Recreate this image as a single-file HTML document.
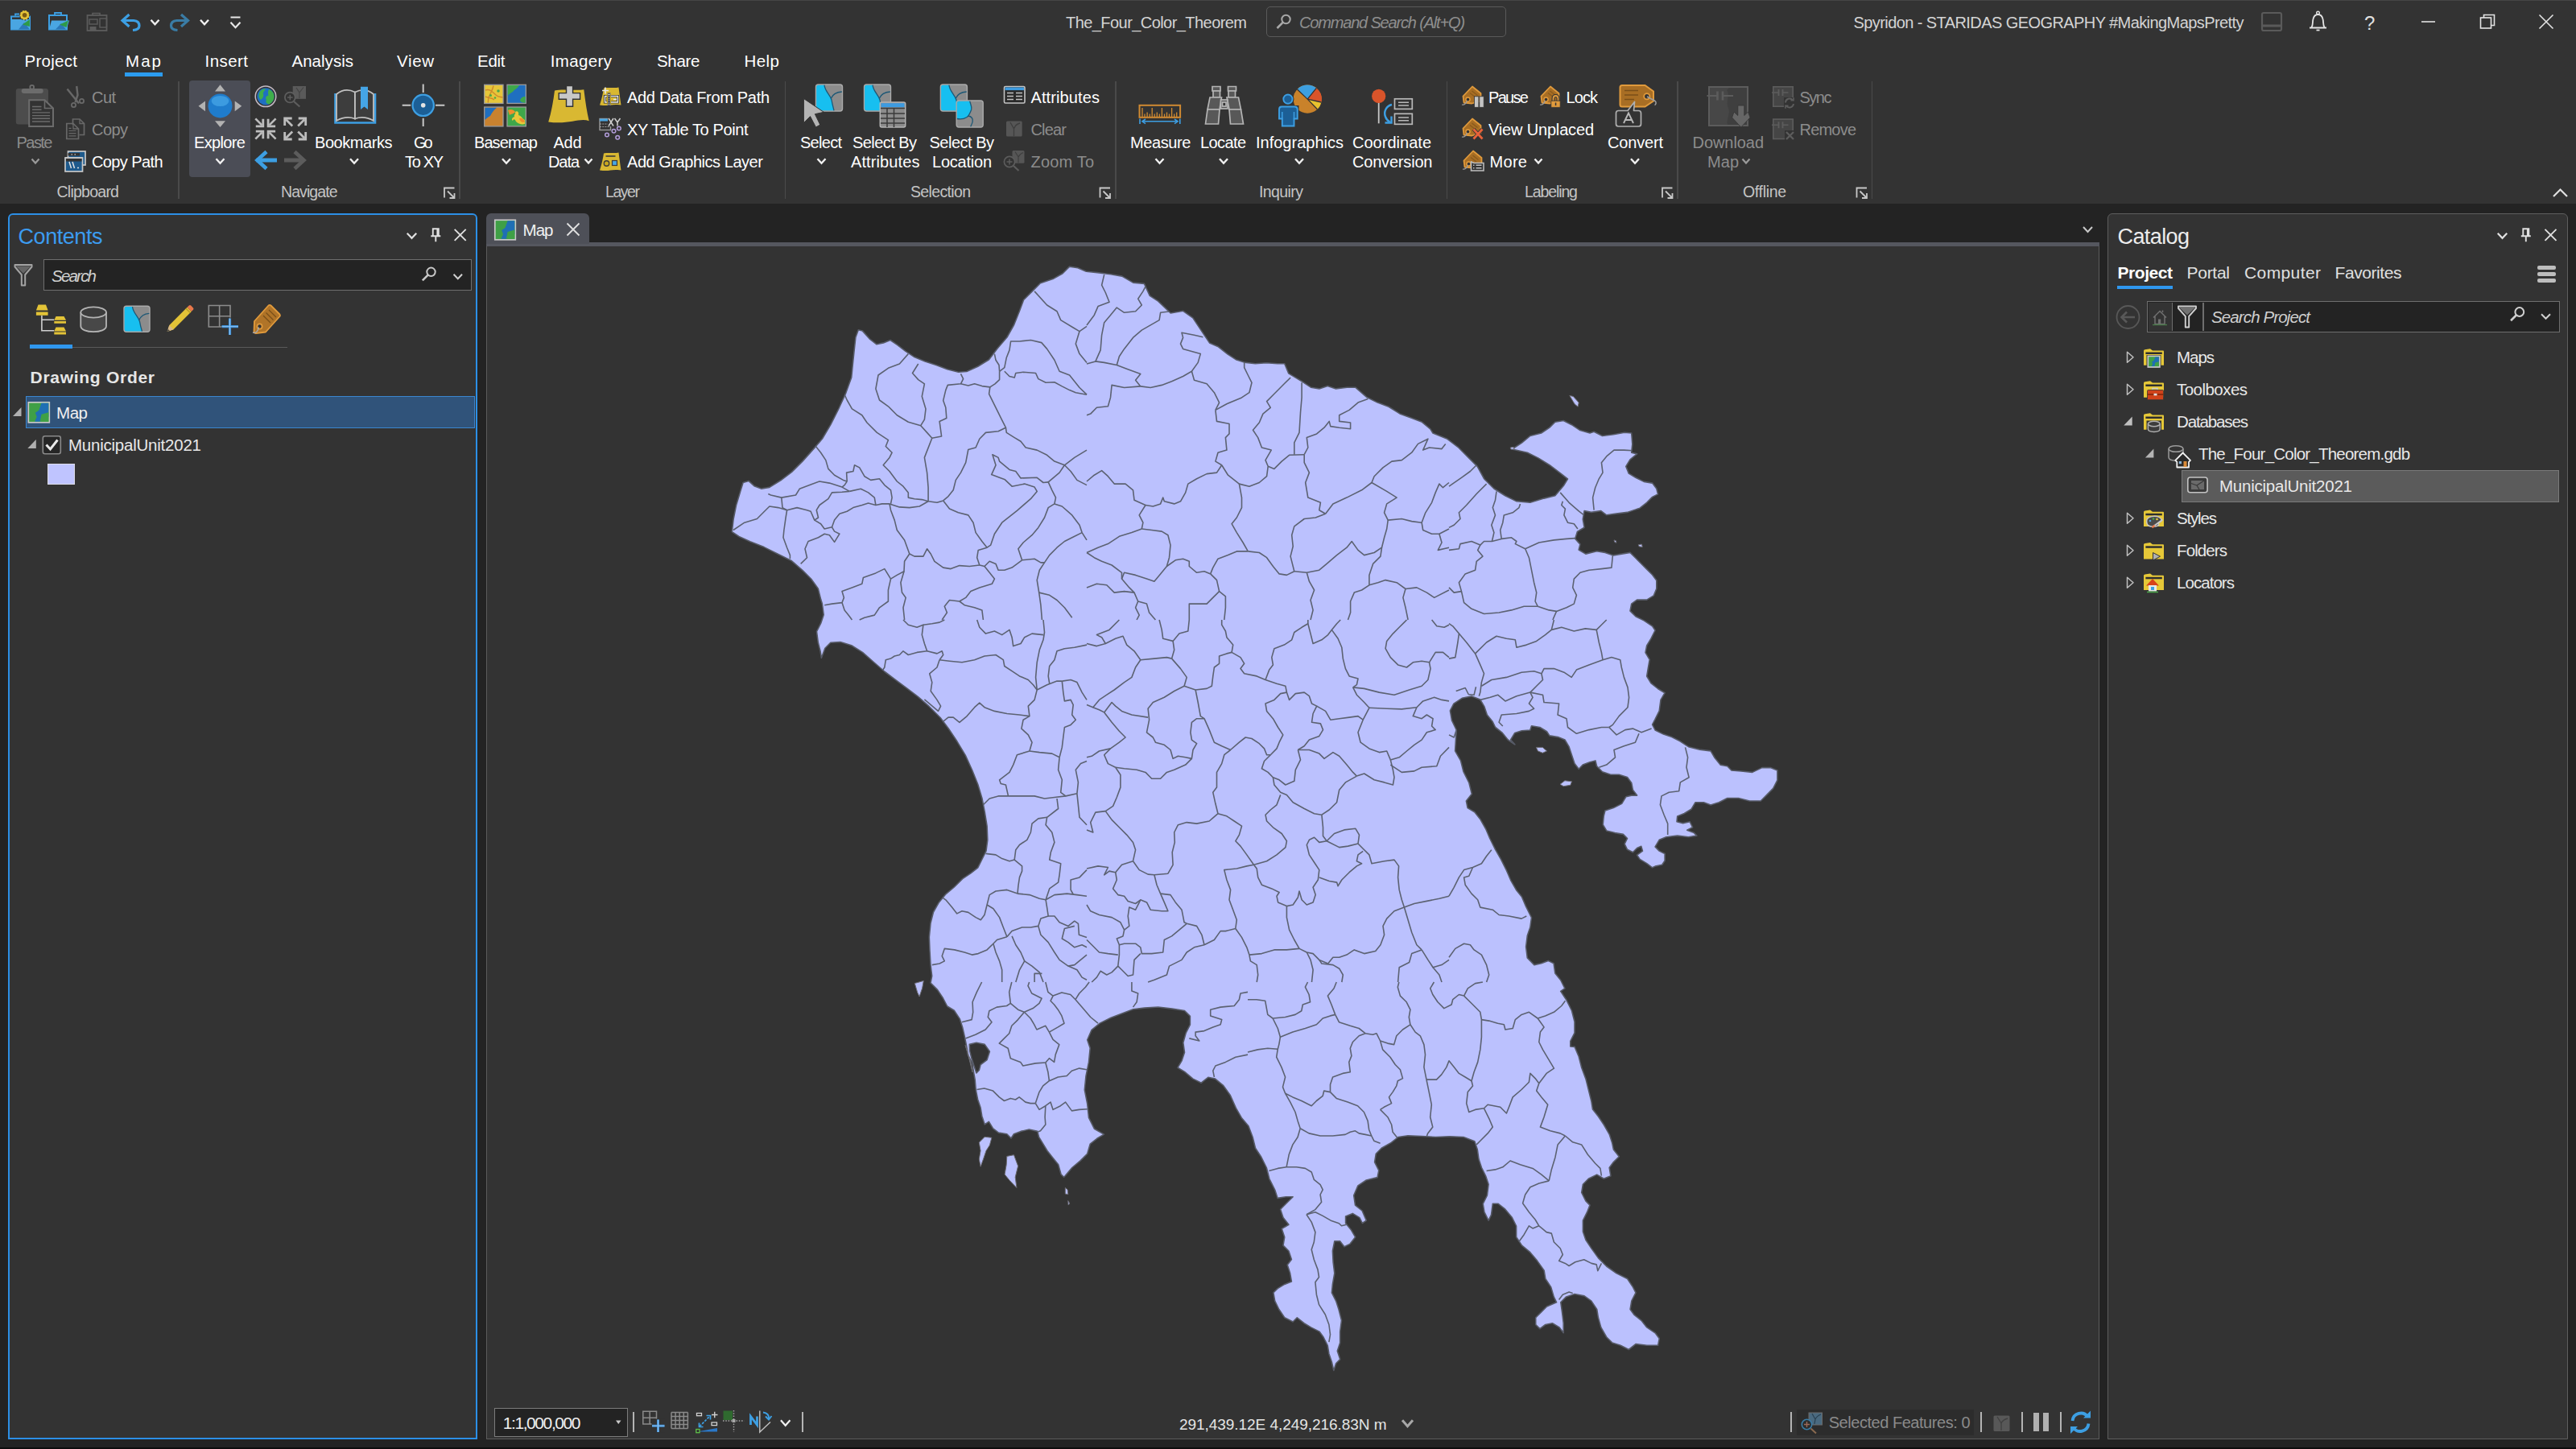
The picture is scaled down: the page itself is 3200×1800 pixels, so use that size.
<!DOCTYPE html>
<html><head><meta charset="utf-8"><title>The_Four_Color_Theorem - Map - ArcGIS Pro</title>
<style>
html,body{margin:0;padding:0;}
body{width:3200px;height:1800px;background:#232323;overflow:hidden;position:relative;font-family:"Liberation Sans",sans-serif;}
.t{position:absolute;white-space:nowrap;}
.b{position:absolute;}
svg.ov{position:absolute;left:0;top:0;}
</style></head><body>
<div class="b" style="left:0px;top:0px;width:3200px;height:253px;background:#333333;"></div>
<div class="b" style="left:0px;top:0px;width:3200px;height:1px;background:#454545;"></div>
<div class="b" style="left:0px;top:1798px;width:3200px;height:2px;background:#0c0c0c;"></div>
<div class="b" style="left:10px;top:265px;width:583px;height:1523px;background:#333333;border:2px solid #2c8fe6;border-radius:6px 6px 0 0;box-sizing:border-box;"></div>
<div class="b" style="left:604px;top:305px;width:2004px;height:1483px;background:#333333;border:1.5px solid #5c5c5c;border-top:none;box-sizing:border-box;"></div>
<div class="b" style="left:604px;top:301px;width:2004px;height:5px;background:#55575f;"></div>
<div class="b" style="left:604px;top:265px;width:128px;height:38px;background:#4e5058;border-radius:6px 6px 0 0;"></div>
<div class="b" style="left:2618px;top:265px;width:572px;height:1523px;background:#333333;border:1.5px solid #5e5e5e;border-radius:6px 6px 0 0;box-sizing:border-box;"></div>
<div class="t" style="left:1324.0px;top:15.6px;font-size:20px;line-height:24px;color:#d4d4d4;letter-spacing:-0.56px;">The_Four_Color_Theorem</div>
<div class="b" style="left:1572.5px;top:7.5px;width:298px;height:38px;border:1.5px solid #5a5a5a;border-radius:5px;box-sizing:border-box;"></div>
<div class="t" style="left:1614.0px;top:15.6px;font-size:20px;line-height:24px;color:#8e8e8e;letter-spacing:-1.17px;font-style:italic;">Command Search (Alt+Q)</div>
<div class="t" style="left:2302.5px;top:15.6px;font-size:20px;line-height:24px;color:#d4d4d4;letter-spacing:-0.58px;">Spyridon - STARIDAS GEOGRAPHY #MakingMapsPretty</div>
<div class="t" style="left:2937.0px;top:14.2px;font-size:24px;line-height:29px;color:#e0e0e0;">?</div>
<div class="t" style="left:30.5px;top:63.2px;font-size:20.5px;line-height:25px;color:#ffffff;letter-spacing:0.28px;">Project</div>
<div class="t" style="left:156.0px;top:63.2px;font-size:20.5px;line-height:25px;color:#ffffff;letter-spacing:2.06px;">Map</div>
<div class="t" style="left:254.5px;top:63.2px;font-size:20.5px;line-height:25px;color:#ffffff;letter-spacing:0.45px;">Insert</div>
<div class="t" style="left:362.5px;top:63.2px;font-size:20.5px;line-height:25px;color:#ffffff;letter-spacing:0.02px;">Analysis</div>
<div class="t" style="left:493.0px;top:63.2px;font-size:20.5px;line-height:25px;color:#ffffff;letter-spacing:0.64px;">View</div>
<div class="t" style="left:593.0px;top:63.2px;font-size:20.5px;line-height:25px;color:#ffffff;letter-spacing:-0.28px;">Edit</div>
<div class="t" style="left:683.7px;top:63.2px;font-size:20.5px;line-height:25px;color:#ffffff;letter-spacing:0.37px;">Imagery</div>
<div class="t" style="left:816.0px;top:63.2px;font-size:20.5px;line-height:25px;color:#ffffff;letter-spacing:-0.30px;">Share</div>
<div class="t" style="left:924.5px;top:63.2px;font-size:20.5px;line-height:25px;color:#ffffff;letter-spacing:0.45px;">Help</div>
<div class="b" style="left:155px;top:90px;width:47px;height:4.5px;background:#2b9cf0;"></div>
<div class="b" style="left:221.25px;top:101px;width:1.5px;height:146px;background:#4a4a4a;"></div>
<div class="b" style="left:570.25px;top:101px;width:1.5px;height:146px;background:#4a4a4a;"></div>
<div class="b" style="left:974.75px;top:101px;width:1.5px;height:146px;background:#4a4a4a;"></div>
<div class="b" style="left:1385.25px;top:101px;width:1.5px;height:146px;background:#4a4a4a;"></div>
<div class="b" style="left:1796.75px;top:101px;width:1.5px;height:146px;background:#4a4a4a;"></div>
<div class="b" style="left:2083.25px;top:101px;width:1.5px;height:146px;background:#4a4a4a;"></div>
<div class="b" style="left:2324.75px;top:101px;width:1.5px;height:146px;background:#4a4a4a;"></div>
<div class="t" style="left:20.5px;top:165.1px;font-size:20px;line-height:24px;color:#8c8c8c;letter-spacing:-1.54px;">Paste</div>
<div class="t" style="left:114.0px;top:109.1px;font-size:20px;line-height:24px;color:#8c8c8c;letter-spacing:-0.56px;">Cut</div>
<div class="t" style="left:114.0px;top:149.1px;font-size:20px;line-height:24px;color:#8c8c8c;letter-spacing:-0.56px;">Copy</div>
<div class="t" style="left:114.0px;top:189.1px;font-size:20px;line-height:24px;color:#ffffff;letter-spacing:-0.61px;">Copy Path</div>
<div class="t" style="left:70.5px;top:226.7px;font-size:19.5px;line-height:23px;color:#c4c4c4;letter-spacing:-0.75px;">Clipboard</div>
<div class="b" style="left:235px;top:100px;width:76px;height:120px;background:#4b4d56;border-radius:4px;"></div>
<div class="t" style="left:241.0px;top:165.1px;font-size:20px;line-height:24px;color:#fff;letter-spacing:-0.64px;">Explore</div>
<div class="t" style="left:391.0px;top:165.1px;font-size:20px;line-height:24px;color:#fff;letter-spacing:-0.44px;">Bookmarks</div>
<div class="t" style="left:514.0px;top:165.1px;font-size:20px;line-height:24px;color:#fff;letter-spacing:-3.18px;">Go</div>
<div class="t" style="left:503.0px;top:188.6px;font-size:20px;line-height:24px;color:#fff;letter-spacing:-1.34px;">To XY</div>
<div class="t" style="left:349.0px;top:226.7px;font-size:19.5px;line-height:23px;color:#c4c4c4;letter-spacing:-0.92px;">Navigate</div>
<div class="t" style="left:589.0px;top:165.1px;font-size:20px;line-height:24px;color:#fff;letter-spacing:-0.92px;">Basemap</div>
<div class="t" style="left:687.5px;top:165.1px;font-size:20px;line-height:24px;color:#fff;letter-spacing:-0.29px;">Add</div>
<div class="t" style="left:681.0px;top:188.6px;font-size:20px;line-height:24px;color:#fff;letter-spacing:-1.08px;">Data</div>
<div class="t" style="left:779.0px;top:109.1px;font-size:20px;line-height:24px;color:#fff;letter-spacing:-0.31px;">Add Data From Path</div>
<div class="t" style="left:779.0px;top:149.1px;font-size:20px;line-height:24px;color:#fff;letter-spacing:-0.39px;">XY Table To Point</div>
<div class="t" style="left:779.0px;top:189.1px;font-size:20px;line-height:24px;color:#fff;letter-spacing:-0.46px;">Add Graphics Layer</div>
<div class="t" style="left:752.0px;top:226.7px;font-size:19.5px;line-height:23px;color:#c4c4c4;letter-spacing:-1.45px;">Layer</div>
<div class="t" style="left:994.0px;top:165.1px;font-size:20px;line-height:24px;color:#fff;letter-spacing:-0.72px;">Select</div>
<div class="t" style="left:1059.0px;top:165.1px;font-size:20px;line-height:24px;color:#fff;letter-spacing:-0.56px;">Select By</div>
<div class="t" style="left:1057.0px;top:188.6px;font-size:20px;line-height:24px;color:#fff;letter-spacing:0.11px;">Attributes</div>
<div class="t" style="left:1154.5px;top:165.1px;font-size:20px;line-height:24px;color:#fff;letter-spacing:-0.50px;">Select By</div>
<div class="t" style="left:1158.0px;top:188.6px;font-size:20px;line-height:24px;color:#fff;letter-spacing:-0.23px;">Location</div>
<div class="t" style="left:1280.5px;top:109.1px;font-size:20px;line-height:24px;color:#fff;letter-spacing:0.11px;">Attributes</div>
<div class="t" style="left:1280.5px;top:149.1px;font-size:20px;line-height:24px;color:#8c8c8c;letter-spacing:-0.82px;">Clear</div>
<div class="t" style="left:1280.5px;top:189.1px;font-size:20px;line-height:24px;color:#8c8c8c;letter-spacing:0.18px;">Zoom To</div>
<div class="t" style="left:1131.0px;top:226.7px;font-size:19.5px;line-height:23px;color:#c4c4c4;letter-spacing:-0.65px;">Selection</div>
<div class="t" style="left:1404.0px;top:165.1px;font-size:20px;line-height:24px;color:#fff;letter-spacing:-0.39px;">Measure</div>
<div class="t" style="left:1491.0px;top:165.1px;font-size:20px;line-height:24px;color:#fff;letter-spacing:-0.61px;">Locate</div>
<div class="t" style="left:1560.0px;top:165.1px;font-size:20px;line-height:24px;color:#fff;">Infographics</div>
<div class="t" style="left:1680.0px;top:165.1px;font-size:20px;line-height:24px;color:#fff;letter-spacing:0.02px;">Coordinate</div>
<div class="t" style="left:1680.0px;top:188.6px;font-size:20px;line-height:24px;color:#fff;letter-spacing:-0.19px;">Conversion</div>
<div class="t" style="left:1564.0px;top:226.7px;font-size:19.5px;line-height:23px;color:#c4c4c4;letter-spacing:-0.59px;">Inquiry</div>
<div class="t" style="left:1849.0px;top:109.1px;font-size:20px;line-height:24px;color:#fff;letter-spacing:-1.68px;">Pause</div>
<div class="t" style="left:1945.5px;top:109.1px;font-size:20px;line-height:24px;color:#fff;letter-spacing:-0.92px;">Lock</div>
<div class="t" style="left:1849.0px;top:149.1px;font-size:20px;line-height:24px;color:#fff;letter-spacing:-0.17px;">View Unplaced</div>
<div class="t" style="left:1850.5px;top:189.1px;font-size:20px;line-height:24px;color:#fff;letter-spacing:0.31px;">More</div>
<div class="t" style="left:1997.0px;top:165.1px;font-size:20px;line-height:24px;color:#fff;letter-spacing:-0.17px;">Convert</div>
<div class="t" style="left:1894.0px;top:226.7px;font-size:19.5px;line-height:23px;color:#c4c4c4;letter-spacing:-1.11px;">Labeling</div>
<div class="t" style="left:2102.5px;top:165.1px;font-size:20px;line-height:24px;color:#8c8c8c;letter-spacing:-0.06px;">Download</div>
<div class="t" style="left:2121.0px;top:188.6px;font-size:20px;line-height:24px;color:#8c8c8c;letter-spacing:0.05px;">Map</div>
<div class="t" style="left:2235.5px;top:109.1px;font-size:20px;line-height:24px;color:#8c8c8c;letter-spacing:-1.49px;">Sync</div>
<div class="t" style="left:2235.5px;top:149.1px;font-size:20px;line-height:24px;color:#8c8c8c;letter-spacing:-0.79px;">Remove</div>
<div class="t" style="left:2165.0px;top:226.7px;font-size:19.5px;line-height:23px;color:#c4c4c4;letter-spacing:-0.33px;">Offline</div>
<div class="t" style="left:22.5px;top:277.6px;font-size:27px;line-height:32px;color:#3c9cf0;letter-spacing:-0.44px;">Contents</div>
<div class="b" style="left:54px;top:322px;width:532px;height:38.5px;background:#232323;border:1.5px solid #6e6e6e;box-sizing:border-box;"></div>
<div class="t" style="left:64.0px;top:330.4px;font-size:20.5px;line-height:25px;color:#d0d0d0;letter-spacing:-1.79px;font-style:italic;">Search</div>
<div class="b" style="left:90px;top:430.5px;width:267px;height:1.5px;background:#5a5a5a;"></div>
<div class="b" style="left:37px;top:427.5px;width:53px;height:5px;background:#2f97ee;"></div>
<div class="t" style="left:37.5px;top:456.2px;font-size:21px;line-height:25px;color:#e6e6e6;letter-spacing:0.72px;font-weight:700;">Drawing Order</div>
<div class="b" style="left:32px;top:492px;width:558px;height:40px;background:#30537a;border:1.5px solid #3b86cf;box-sizing:border-box;"></div>
<div class="t" style="left:70.0px;top:500.4px;font-size:20.5px;line-height:25px;color:#f0f0f0;letter-spacing:-0.44px;">Map</div>
<div class="t" style="left:85.0px;top:539.9px;font-size:20.5px;line-height:25px;color:#e8e8e8;letter-spacing:-0.23px;">MunicipalUnit2021</div>
<div class="b" style="left:59px;top:576px;width:33.5px;height:26px;background:#bfc4ff;border:1.5px solid #dcdcea;box-sizing:border-box;"></div>
<div class="t" style="left:649.5px;top:272.9px;font-size:20.5px;line-height:25px;color:#f0f0f0;letter-spacing:-0.94px;">Map</div>
<div class="b" style="left:613.5px;top:1749px;width:166px;height:35.5px;background:#232323;border:1.5px solid #7c7c7c;box-sizing:border-box;"></div>
<div class="t" style="left:624.7px;top:1754.9px;font-size:21px;line-height:25px;color:#f0f0f0;letter-spacing:-1.41px;">1:1,000,000</div>
<div class="b" style="left:786px;top:1754px;width:2px;height:25px;background:#b4b4b4;"></div>
<div class="b" style="left:996px;top:1754px;width:2px;height:25px;background:#b4b4b4;"></div>
<div class="b" style="left:2223.7px;top:1754px;width:2px;height:25px;background:#b4b4b4;"></div>
<div class="b" style="left:2459.5px;top:1754px;width:2px;height:25px;background:#b4b4b4;"></div>
<div class="b" style="left:2511px;top:1754px;width:2px;height:25px;background:#b4b4b4;"></div>
<div class="b" style="left:2559px;top:1754px;width:2px;height:25px;background:#b4b4b4;"></div>
<div class="t" style="left:1465.0px;top:1757.9px;font-size:19px;line-height:23px;color:#e4e4e4;letter-spacing:-0.05px;">291,439.12E 4,249,216.83N m</div>
<div class="b" style="left:2231.7px;top:1751px;width:220.5px;height:32px;background:#2c2c2c;"></div>
<div class="t" style="left:2271.7px;top:1755.1px;font-size:20px;line-height:24px;color:#8a8a8a;letter-spacing:-0.46px;">Selected Features: 0</div>
<div class="b" style="left:2526px;top:1755px;width:6.5px;height:23px;background:#b0b0b0;"></div>
<div class="b" style="left:2537.5px;top:1755px;width:7px;height:23px;background:#b0b0b0;"></div>
<div class="t" style="left:2630.5px;top:277.6px;font-size:27px;line-height:32px;color:#ececec;letter-spacing:-0.59px;">Catalog</div>
<div class="t" style="left:2630.5px;top:325.7px;font-size:21px;line-height:25px;color:#ffffff;letter-spacing:-0.45px;font-weight:700;">Project</div>
<div class="t" style="left:2716.5px;top:325.7px;font-size:21px;line-height:25px;color:#e0e0e0;letter-spacing:-0.27px;">Portal</div>
<div class="t" style="left:2788.0px;top:325.7px;font-size:21px;line-height:25px;color:#e0e0e0;letter-spacing:0.40px;">Computer</div>
<div class="t" style="left:2900.5px;top:325.7px;font-size:21px;line-height:25px;color:#e0e0e0;letter-spacing:-0.42px;">Favorites</div>
<div class="b" style="left:2630px;top:355px;width:69px;height:3.5px;background:#2f97ee;"></div>
<div class="b" style="left:3152px;top:329.5px;width:23px;height:5px;background:#bdbdbd;border-radius:2px;"></div>
<div class="b" style="left:3152px;top:337.7px;width:23px;height:5px;background:#bdbdbd;border-radius:2px;"></div>
<div class="b" style="left:3152px;top:345.9px;width:23px;height:5px;background:#bdbdbd;border-radius:2px;"></div>
<div class="b" style="left:2667px;top:374px;width:513px;height:38.5px;background:#232323;border:1.5px solid #6e6e6e;box-sizing:border-box;"></div>
<div class="b" style="left:2668.5px;top:375.5px;width:30px;height:35.5px;background:#333333;border-right:1.5px solid #6e6e6e;box-sizing:border-box;"></div>
<div class="b" style="left:2736px;top:375.5px;width:1.5px;height:35.5px;background:#6e6e6e;"></div>
<div class="t" style="left:2747.0px;top:381.4px;font-size:20.5px;line-height:25px;color:#cfcfcf;letter-spacing:-0.88px;font-style:italic;">Search Project</div>
<div class="b" style="left:2710px;top:584px;width:468.5px;height:39.5px;background:#5b5b5b;border:1.5px solid #7a7a7a;box-sizing:border-box;"></div>
<div class="t" style="left:2704.0px;top:431.4px;font-size:20.5px;line-height:25px;color:#e8e8e8;letter-spacing:-1.04px;">Maps</div>
<div class="t" style="left:2704.0px;top:471.4px;font-size:20.5px;line-height:25px;color:#e8e8e8;letter-spacing:-0.54px;">Toolboxes</div>
<div class="t" style="left:2704.0px;top:511.4px;font-size:20.5px;line-height:25px;color:#e8e8e8;letter-spacing:-1.13px;">Databases</div>
<div class="t" style="left:2731.0px;top:551.4px;font-size:20.5px;line-height:25px;color:#e8e8e8;letter-spacing:-0.78px;">The_Four_Color_Theorem.gdb</div>
<div class="t" style="left:2757.0px;top:591.4px;font-size:20.5px;line-height:25px;color:#e8e8e8;letter-spacing:-0.23px;">MunicipalUnit2021</div>
<div class="t" style="left:2704.0px;top:631.4px;font-size:20.5px;line-height:25px;color:#e8e8e8;letter-spacing:-1.17px;">Styles</div>
<div class="t" style="left:2704.0px;top:671.4px;font-size:20.5px;line-height:25px;color:#e8e8e8;letter-spacing:-0.89px;">Folders</div>
<div class="t" style="left:2704.0px;top:711.4px;font-size:20.5px;line-height:25px;color:#e8e8e8;letter-spacing:-0.95px;">Locators</div>
<svg class="ov" width="3200" height="1800" viewBox="0 0 3200 1800">
<g transform="translate(13 14) scale(1)"><path d="M6 5.5V3.5H11" fill="none" stroke="#3d9fe3" stroke-width="1.8"/>
<path d="M1 6.5H24V22.5H1Z" fill="none" stroke="#3d9fe3" stroke-width="2"/>
<path d="M1 10H24V22.5H1Z" fill="#4aa6e2"/>
<path d="M10 22.5L17 14L24 22.5Z" fill="#2b78b8"/><path d="M15 16.5L24 10V19Z" fill="#2e9a48"/>
<circle cx="17.6" cy="4.8" r="6" fill="#e3c337"/><circle cx="17.6" cy="4.8" r="6" fill="none" stroke="#333" stroke-width="1.2" stroke-dasharray="1.6 2.2"/><circle cx="17.6" cy="4.8" r="2.8" fill="#7a5a12"/></g>
<g transform="translate(60 14) scale(1)"><path d="M8 5V2H16V5" fill="none" stroke="#3d9fe3" stroke-width="1.8"/>
<path d="M1 5H23V22.5H1Z" fill="none" stroke="#3d9fe3" stroke-width="2"/>
<path d="M4 11.5H26L22.5 22.5H1Z" fill="#4aa6e2"/>
<path d="M9 22.5L16 15L22 22.5Z" fill="#2b78b8"/><path d="M14 16.5L25 11.5L22.5 20Z" fill="#2e9a48"/></g>
<g transform="translate(107 15) scale(1)"><path d="M8 4V1.5H17V4" fill="none" stroke="#5c5c5c" stroke-width="1.6"/>
<rect x="1.5" y="4" width="24" height="19" fill="none" stroke="#5c5c5c" stroke-width="1.8"/>
<rect x="17" y="8" width="8.5" height="11" fill="none" stroke="#5c5c5c" stroke-width="1.4"/>
<rect x="4" y="9" width="10" height="6" fill="none" stroke="#5c5c5c" stroke-width="1.4"/>
<rect x="4.5" y="18" width="8" height="5" fill="#5c5c5c"/></g>
<path d="M160.5 18L152 25.5L160.5 33M152.5 25.5H166Q173 26 173 32Q173 37 165 37.5" fill="none" stroke="#3d9fe3" stroke-width="3.2" stroke-linejoin="miter"/>
<path d="M187.5 24.75L192.5 30.25L197.5 24.75" fill="none" stroke="#f0f0f0" stroke-width="2.4"/>
<path d="M225 18L233.5 25.5L225 33M233 25.5H219.5Q212.5 26 212.5 32Q212.5 37 220.5 37.5" fill="none" stroke="#3a7ca5" stroke-width="3.2"/>
<path d="M249.0 24.75L254 30.25L259.0 24.75" fill="none" stroke="#f0f0f0" stroke-width="2.4"/>
<path d="M286.5 21.5H298.5" stroke="#e8e8e8" stroke-width="2"/>
<path d="M286.5 27.75L292.5 34.25L298.5 27.75" fill="none" stroke="#e8e8e8" stroke-width="2.2"/>
<rect x="2810" y="16" width="24" height="22" rx="2" fill="none" stroke="#5a5a5a" stroke-width="2.2"/><path d="M2811 32H2833" stroke="#5a5a5a" stroke-width="3"/>
<path d="M2869 34.5H2890M2871.5 34C2873.5 31 2872.5 27 2873.5 23.5C2874.5 19.5 2877 18 2879.5 18C2882 18 2884.5 19.5 2885.5 23.5C2886.5 27 2885.5 31 2887.5 34" fill="none" stroke="#e4e4e4" stroke-width="1.8"/><circle cx="2879.5" cy="16" r="1.8" fill="none" stroke="#e4e4e4" stroke-width="1.4"/><path d="M2877.5 37.5H2881.5" stroke="#e4e4e4" stroke-width="1.8"/>
<path d="M3008 27H3025" stroke="#e4e4e4" stroke-width="1.6"/>
<rect x="3081.5" y="22" width="13" height="13" fill="none" stroke="#e4e4e4" stroke-width="1.6"/><path d="M3085.5 22V18.5H3098.5V31.5H3094.5" fill="none" stroke="#e4e4e4" stroke-width="1.6"/>
<path d="M3154.5 18.5L3171.5 35.5M3171.5 18.5L3154.5 35.5" stroke="#e4e4e4" stroke-width="1.6"/>
<circle cx="1597.500" cy="24" r="5.200" fill="none" stroke="#a8a8a8" stroke-width="2"/><path d="M1593.800 27.700L1586.500 35" stroke="#a8a8a8" stroke-width="2.600"/>
<path d="M3172 244L3180.5 235.5L3189 244" fill="none" stroke="#e0e0e0" stroke-width="2.2"/>
<rect x="19.8" y="110" width="40.2" height="44.5" rx="3" fill="#4c4c4c"/>
<rect x="26.7" y="110" width="27" height="6" rx="3" fill="#6c6c6c"/><circle cx="39.7" cy="108.3" r="2.4" fill="none" stroke="#6c6c6c" stroke-width="1.8"/>
<path d="M36.2 124.2H55.5L66 134.5V157H36.2Z" fill="#333" stroke="#6c6c6c" stroke-width="2"/><path d="M55.5 124.2V134.5H66" fill="none" stroke="#6c6c6c" stroke-width="1.6"/>
<path d="M40 132.5H51.5M40 136.2H51.5M40 139.9H62M40 143.6H62M40 147.3H62M40 151H62" stroke="#6c6c6c" stroke-width="1.4"/>
<path d="M39.5 197.5L44 202.5L48.5 197.5" fill="none" stroke="#9a9a9a" stroke-width="2.2"/>
<path d="M83.5 110.5L98 128.5M95.2 107L96.5 118L93.5 127" fill="none" stroke="#686868" stroke-width="2.4"/>
<circle cx="91.5" cy="130.5" r="2.6" fill="none" stroke="#686868" stroke-width="1.8"/><circle cx="101.5" cy="125.5" r="2.6" fill="none" stroke="#686868" stroke-width="1.8"/>
<path d="M90.5 155V148H99L104.5 153.5V167.5H98.5" fill="none" stroke="#686868" stroke-width="1.7"/><path d="M99 148V153.5H104.5" fill="none" stroke="#686868" stroke-width="1.3"/>
<path d="M82.8 153.5H91L97.5 160V172.5H82.8Z" fill="none" stroke="#686868" stroke-width="1.7"/><path d="M91 153.5V160H97.5" fill="none" stroke="#686868" stroke-width="1.3"/>
<path d="M85.5 162.5H94.5M85.5 165.7H94.5M85.5 168.9H94.5M85.5 159.3H88.5" stroke="#686868" stroke-width="1.2"/>
<rect x="84.5" y="188" width="21.5" height="17" fill="#1e5a8c" stroke="#c8c8c8" stroke-width="1.7"/><path d="M84.5 191.8H99" stroke="#333" stroke-width="3.5"/><path d="M88.5 191.8h1.5M92.5 191.8h1.5" stroke="#c8c8c8" stroke-width="1.2"/>
<rect x="81" y="196" width="21.5" height="17" fill="#1e5a8c" stroke="#c8c8c8" stroke-width="1.7"/><path d="M82 198.7H101.5" stroke="#333" stroke-width="3.6"/><path d="M81 196H102.500" stroke="#c8c8c8" stroke-width="1.7"/>
<path d="M86 201L88.500 209M90 201L92.500 209" stroke="#e0e0e0" stroke-width="1.5"/><path d="M96 208.500h2" stroke="#e0e0e0" stroke-width="1.6"/>
<circle cx="273.5" cy="131.4" r="15" fill="#1f7ccc"/><ellipse cx="273.5" cy="125.5" rx="10.8" ry="6.6" fill="#3c9be0"/>
<path d="M273.5 105.300L267 113.400H280ZM273.5 157.900L267 150.200H280ZM246.5 131.800L255 125.400V138.200ZM300.300 131.800L291.700 125.400V138.200Z" fill="#b2b2b2"/>
<path d="M268.5 197.25L273.5 202.75L278.5 197.25" fill="none" stroke="#f0f0f0" stroke-width="2.4"/>
<circle cx="330" cy="119.800" r="12.800" fill="none" stroke="#c4bcc6" stroke-width="1.5"/><circle cx="330" cy="119.800" r="10.600" fill="#1f6fc2"/>
<path d="M322 116C323 112 327 110 330 110.500C329 113 326.500 114 327 117C328 120 326 122 324 124C321.500 122 321 119 322 116Z" fill="#3fae4a"/>
<path d="M334 111C338 112.500 340.500 116 340.500 120C340.500 124 338 127.500 334.500 129.500C331 129 329.500 126.500 331 124C329 121.500 331 119 333.500 118.500C332.500 115.500 333 113 334 111Z" fill="#3fae4a"/>
<rect x="363.700" y="107" width="16.300" height="15.800" fill="#5a5a5a"/><path d="M368 109L372 115V122M377 108.500L372 115" stroke="#444" stroke-width="1.200" fill="none"/>
<circle cx="360.300" cy="121" r="6.400" fill="#333" stroke="#5e5e5e" stroke-width="1.800"/><path d="M357 121H363.600M360.300 117.700V124.300" stroke="#5e5e5e" stroke-width="1.500"/><path d="M365 126L372.300 132.500" stroke="#5e5e5e" stroke-width="2.200"/>
<path d="M317.3 147.3L325.3 155.3" stroke="#bdbdbd" stroke-width="2.6"/><path d="M317.8 156.8H326.8V147.8" fill="none" stroke="#bdbdbd" stroke-width="2.8"/>
<path d="M342.6 147.3L334.6 155.3" stroke="#bdbdbd" stroke-width="2.6"/><path d="M342.1 156.8H333.1V147.8" fill="none" stroke="#bdbdbd" stroke-width="2.8"/>
<path d="M317.3 172.7L325.3 164.7" stroke="#bdbdbd" stroke-width="2.6"/><path d="M317.8 163.2H326.8V172.2" fill="none" stroke="#bdbdbd" stroke-width="2.8"/>
<path d="M342.6 172.7L334.6 164.7" stroke="#bdbdbd" stroke-width="2.6"/><path d="M342.1 163.2H333.1V172.2" fill="none" stroke="#bdbdbd" stroke-width="2.8"/>
<path d="M363.2 156.5L355.2 148.5" stroke="#bdbdbd" stroke-width="2.6"/><path d="M362.7 147.0H353.7V156.0" fill="none" stroke="#bdbdbd" stroke-width="2.8"/>
<path d="M370.2 156.5L378.2 148.5" stroke="#bdbdbd" stroke-width="2.6"/><path d="M370.7 147.0H379.7V156.0" fill="none" stroke="#bdbdbd" stroke-width="2.8"/>
<path d="M363.2 163.5L355.2 171.5" stroke="#bdbdbd" stroke-width="2.6"/><path d="M362.7 173.0H353.7V164.0" fill="none" stroke="#bdbdbd" stroke-width="2.8"/>
<path d="M370.2 163.5L378.2 171.5" stroke="#bdbdbd" stroke-width="2.6"/><path d="M370.7 173.0H379.7V164.0" fill="none" stroke="#bdbdbd" stroke-width="2.8"/>
<path d="M318.500 199H344" stroke="#3d9fe3" stroke-width="5"/><path d="M331 188.500L319.500 199L331 209.500" fill="none" stroke="#3d9fe3" stroke-width="4.600"/>
<path d="M353 199H378" stroke="#5c5c5c" stroke-width="5"/><path d="M366 188.500L377.500 199L366 209.500" fill="none" stroke="#5c5c5c" stroke-width="4.600"/>
<path d="M416.500 116V152.500H466V116" fill="none" stroke="#3d9fe3" stroke-width="2.600"/>
<path d="M418 117C426 110.500 434 111 441 114.500V147.500C434 145 426 145.500 418 150Z" fill="#3d3d3d" stroke="#c0c0c0" stroke-width="1.800"/>
<path d="M464 117C456 110.500 448 111 441 114.500V147.500C448 145 456 145.500 464 150Z" fill="#3d3d3d" stroke="#c0c0c0" stroke-width="1.800"/>
<path d="M448 107.800H457V136L452.500 132.500L448 136Z" fill="#45a5e6"/>
<path d="M435.0 197.25L440 202.75L445.0 197.25" fill="none" stroke="#f0f0f0" stroke-width="2.4"/>
<circle cx="525.700" cy="130.800" r="13.200" fill="#1c5f96" stroke="#3d9fe3" stroke-width="2.200"/><circle cx="525.700" cy="130.800" r="2.800" fill="#e4e4e4"/>
<path d="M499.700 130.800H510.300M541 130.800H552.300M525.700 104.400V115M525.700 146.800V157" stroke="#c8c8c8" stroke-width="2"/>
<path d="M552 245.5V233.5H564.5" fill="none" stroke="#c8c8c8" stroke-width="1.800"/><path d="M556 237.5L564.5 246.0M558.5 246.0H564.5V240.0" fill="none" stroke="#c8c8c8" stroke-width="1.800"/>
<path d="M1366.5 245.5V233.5H1379.0" fill="none" stroke="#c8c8c8" stroke-width="1.800"/><path d="M1370.5 237.5L1379.0 246.0M1373.0 246.0H1379.0V240.0" fill="none" stroke="#c8c8c8" stroke-width="1.800"/>
<path d="M2065 245.5V233.5H2077.5" fill="none" stroke="#c8c8c8" stroke-width="1.800"/><path d="M2069 237.5L2077.5 246.0M2071.5 246.0H2077.5V240.0" fill="none" stroke="#c8c8c8" stroke-width="1.800"/>
<path d="M2306.5 245.5V233.5H2319.0" fill="none" stroke="#c8c8c8" stroke-width="1.800"/><path d="M2310.5 237.5L2319.0 246.0M2313.0 246.0H2319.0V240.0" fill="none" stroke="#c8c8c8" stroke-width="1.800"/>
<rect x="601.700" y="105.300" width="23.300" height="23.100" fill="#e6c63a" stroke="#9c9c9c" stroke-width="1.300"/>
<path d="M603 112C608 110 612 114 616 118C619 121 622 120 624.500 121M613 106.500C612 112 609 116 607 121C606 124 607 126 606 127.500M603 120C607 122 611 121 614 124" fill="none" stroke="#cf8a2c" stroke-width="1.400"/>
<circle cx="619" cy="113" r="1.800" fill="#4aa84a"/><circle cx="609.500" cy="118.500" r="1.500" fill="#4aa84a"/><circle cx="615" cy="121.500" r="1.300" fill="#4aa84a"/>
<rect x="630" y="105.300" width="23.300" height="23.100" fill="#1f6fc0" stroke="#9c9c9c" stroke-width="1.300"/>
<path d="M630.700 106H645C643 110 639 111 637 114C634 116 632 117 630.700 119Z" fill="#3fa84a"/><path d="M652.600 120C649 119.500 646.500 122 646 125C647 127 649 127.700 652.600 127.700Z" fill="#3fa84a"/>
<rect x="601.700" y="133" width="23.300" height="23.900" fill="#c9822f" stroke="#9c9c9c" stroke-width="1.300"/>
<path d="M602.400 133.700H617C613 137 611 140 609 144C606 146 604 147 602.400 149Z" fill="#1f6fc0"/>
<rect x="630" y="133" width="23.300" height="23.900" fill="#3fa84a" stroke="#9c9c9c" stroke-width="1.300"/>
<path d="M631 137C634 135 638 136 640 139C638 142 635 141 633 143Z" fill="#ee8f2c"/><path d="M640 139C643 137 645 140 644 143C648 144 649 148 652 149V154C648 155 644 154 641 151C640 148 638 147 637 150C635 149 636 146 639 145C638 142 641 142 640 139Z" fill="#e8c83a"/><path d="M645 147C648 146 651 148 652 151C650 153 646 152 645 147Z" fill="#ee8f2c"/>
<path d="M624.0 197.25L629 202.75L634.0 197.25" fill="none" stroke="#f0f0f0" stroke-width="2.4"/>
<path d="M689 112.500C700 110 714 113 725.300 111.300C727 125 729 139 731.700 150.200C720 146 707 155 681.200 151.500C685 139 687.500 125 689 112.500Z" fill="#d9b832"/>
<path d="M703.500 106.600H711.600V115.600H720.600V123.200H711.600V132.200H703.500V123.200H694.200V115.600H703.500Z" fill="#c8c8c8" stroke="#333" stroke-width="1.400"/>
<path d="M726.5 197.5L731 202.5L735.5 197.5" fill="none" stroke="#f0f0f0" stroke-width="2.4"/>
<path d="M750 109.500C756 108 763 110 768.500 108.500C769.500 116 770.500 124 771.500 130.500C765 128.500 757 132.500 745 130.500C747.500 123 749 116 750 109.500Z" fill="#d9b832"/>
<path d="M748 112.500H756M752 108.500V116.500" stroke="#e8e8e8" stroke-width="1.600"/><path d="M748 112.500H756M752 108.500V116.500" stroke="#333" stroke-width="3.400" opacity="0"/>
<path d="M754 119.500H751.500V127H754M759 119.500H767.500V127H759" fill="none" stroke="#333" stroke-width="3.200"/><path d="M754 119.500H751.500V127H754M759 119.500H767.500V127H759M762 123.500H766" fill="none" stroke="#e8e8e8" stroke-width="1.400"/>
<path d="M756.500 117V130M754.500 117H758.500M754.500 130H758.500" stroke="#333" stroke-width="3"/><path d="M756.500 117V130M754.500 117H758.500M754.500 130H758.500" stroke="#e8e8e8" stroke-width="1.200" stroke-dasharray="1.500 1"/>
<rect x="745" y="147.500" width="13.500" height="14" fill="none" stroke="#9a9a9a" stroke-width="1.400"/><rect x="745" y="147.500" width="13.500" height="3" fill="#4aa6e2"/>
<path d="M745 154H758.500M745 157.500H758.500" stroke="#9a9a9a" stroke-width="1.100" stroke-dasharray="2 1.200"/>
<rect x="755" y="146" width="17" height="11" fill="#333"/>
<path d="M756 147L762 156.500M762 147L756 156.500M763.500 147L767 152L770.500 147M767 152V156.500" fill="none" stroke="#d0d0d0" stroke-width="1.500"/>
<g fill="none" stroke="#b39ddb" stroke-width="1.500"><circle cx="768.900" cy="159.500" r="2.300"/><circle cx="762.500" cy="162.800" r="2.300"/><circle cx="754" cy="167.500" r="2.300"/><circle cx="767.200" cy="170.700" r="2.300"/></g>
<path d="M750 190.500C756 189 763 191 768.500 189.500C769.500 197 770.500 205 771.500 211.500C765 209.500 757 213.500 745 211.500C747.500 204 749 197 750 190.500Z" fill="#d9b832"/>
<path d="M752.500 194H764.500" stroke="#3a3a3a" stroke-width="1.600"/><circle cx="753.500" cy="203" r="3.200" fill="#c9a81e" stroke="#3a3a3a" stroke-width="1.400"/><rect x="760.500" y="199.500" width="6" height="6" fill="#4aa6e2" stroke="#3a3a3a" stroke-width="1.200"/>
<rect x="1013.5" y="105" width="33" height="33" rx="3" fill="#8c8c8c" stroke="#ababab" stroke-width="1.400"/>
<path d="M1014.2 108Q1014.2 105.7 1016.5 105.7H1024.0C1025.0 114 1031.5 118 1033.0 124C1034.0 130 1035.0 133 1036.0 137.3H1016.5Q1014.2 137.3 1014.2 135Z" fill="#17bff0"/>
<path d="M1024.0 105.7C1025.0 114 1031.5 118 1033.0 124C1034.0 130 1035.0 133 1036.0 137.3M1032.5 122C1034.5 117 1039.5 114.5 1045.8 114" fill="none" stroke="#1d5876" stroke-width="1.300"/>
<path d="M998.400 122.500L1023.400 139.300L1012.400 141.700L1018.800 155L1013.500 158L1006.500 144.600L998.400 152.700Z" fill="#b4b4b4" stroke="#333" stroke-width="1"/>
<path d="M1015.5 197.25L1020.5 202.75L1025.5 197.25" fill="none" stroke="#f0f0f0" stroke-width="2.4"/>
<rect x="1073.5" y="105" width="33" height="33" rx="3" fill="#8c8c8c" stroke="#ababab" stroke-width="1.400"/>
<path d="M1074.2 108Q1074.2 105.7 1076.5 105.7H1084.0C1085.0 114 1091.5 118 1093.0 124C1094.0 130 1095.0 133 1096.0 137.3H1076.5Q1074.2 137.3 1074.2 135Z" fill="#17bff0"/>
<path d="M1084.0 105.7C1085.0 114 1091.5 118 1093.0 124C1094.0 130 1095.0 133 1096.0 137.3M1092.5 122C1094.5 117 1099.5 114.5 1105.8 114" fill="none" stroke="#1d5876" stroke-width="1.300"/>
<rect x="1093.300" y="127" width="31.400" height="31" rx="2" fill="#8c8c8c" stroke="#b4b4b4" stroke-width="1.500"/><rect x="1094.500" y="128.200" width="29" height="5" fill="#3d9be0"/>
<path d="M1094 134.500H1124M1094 141H1124M1094 147H1124M1094 153H1124M1102 134.500V158M1110.500 134.500V158" stroke="#3a3a3a" stroke-width="1.500"/>
<rect x="1168.4" y="105" width="33" height="33" rx="3" fill="#8c8c8c" stroke="#ababab" stroke-width="1.400"/>
<path d="M1169.1000000000001 108Q1169.1000000000001 105.7 1171.4 105.7H1178.9C1179.9 114 1186.4 118 1187.9 124C1188.9 130 1189.9 133 1190.9 137.3H1171.4Q1169.1000000000001 137.3 1169.1000000000001 135Z" fill="#17bff0"/>
<path d="M1178.9 105.7C1179.9 114 1186.4 118 1187.9 124C1188.9 130 1189.9 133 1190.9 137.3M1187.4 122C1189.4 117 1194.4 114.5 1200.7 114" fill="none" stroke="#1d5876" stroke-width="1.300"/>
<rect x="1188.2" y="125" width="33" height="33" rx="3" fill="#8c8c8c" stroke="#ababab" stroke-width="1.400"/>
<path d="M1188.9 128Q1188.9 125.7 1191.2 125.7H1204.7C1205.7 130 1207.7 133 1206.7 136C1205.2 140 1204.2 143 1201.2 145.5C1197.2 148 1193.2 148.5 1188.9 147.5Z" fill="#17bff0"/>
<path d="M1204.7 125.7C1205.7 130 1207.7 133 1206.7 136C1205.2 140 1204.2 143 1201.2 145.5C1197.2 148 1193.2 148.5 1188.9 147.5M1202.7 144C1206.2 144.5 1208.7 147 1208.2 151C1207.7 154 1206.2 156 1205.7 157.3" fill="none" stroke="#1d5876" stroke-width="1.300"/>
<rect x="1247.500" y="107.500" width="25.500" height="20.500" rx="1.500" fill="#2a2a2a" stroke="#c4c4c4" stroke-width="1.600"/><rect x="1248.500" y="108.500" width="23.500" height="3.600" fill="#3d9be0"/>
<path d="M1251 115.500H1259M1251 119.500H1259M1251 123.500H1259M1262 115.500H1270M1262 119.500H1270M1262 123.500H1270" stroke="#c4c4c4" stroke-width="1.500"/>
<rect x="1250" y="150.400" width="19.700" height="19.200" rx="1.500" fill="#565656"/><path d="M1255 152L1259.500 160V169M1267 153C1263 154 1260.500 157 1259.500 160" fill="none" stroke="#3e3e3e" stroke-width="1.300"/>
<rect x="1257.500" y="187" width="15" height="15.800" rx="1.500" fill="#565656"/><path d="M1261 188.500L1265 195V202M1271 189.500C1268 190.500 1266 193 1265 195" fill="none" stroke="#3e3e3e" stroke-width="1.200"/>
<circle cx="1254" cy="201" r="6.600" fill="#333" stroke="#5c5c5c" stroke-width="1.700"/><path d="M1250.500 201H1257.500M1254 197.500V204.500" stroke="#5c5c5c" stroke-width="1.500"/><path d="M1259 206L1265.500 212" stroke="#5c5c5c" stroke-width="2.200"/>
<rect x="1415.500" y="130.800" width="50.600" height="15" fill="none" stroke="#d08a32" stroke-width="2"/><path d="M1419.0 145V134M1422.0 145V141.5M1425.1 145V139.5M1428.2 145V141.5M1431.2 145V134M1434.2 145V141.5M1437.3 145V139.5M1440.3 145V141.5M1443.4 145V134M1446.5 145V141.5M1449.5 145V139.5M1452.5 145V141.5M1455.6 145V134M1458.7 145V141.5M1461.7 145V139.5" stroke="#d08a32" stroke-width="1.300"/>
<path d="M1416 147.500V154M1465.800 147.500V154M1419 150.800H1463" stroke="#3d9fe3" stroke-width="1.600"/><path d="M1423 148L1419 150.800L1423 153.600M1459 148L1463 150.800L1459 153.600" fill="none" stroke="#3d9fe3" stroke-width="1.600"/>
<path d="M1435.5 197.25L1440.5 202.75L1445.5 197.25" fill="none" stroke="#f0f0f0" stroke-width="2.4"/>
<g fill="#585858" stroke="#b4b4b4" stroke-width="1.700"><path d="M1506 107.500H1516V113H1506ZM1525.500 107.500H1535.500V113H1525.500Z"/><path d="M1507 113H1515.500V121H1507ZM1526 113H1534.500V121H1526Z"/>
<path d="M1503 121H1517.500L1515 136H1500ZM1524 121H1538.500L1541.500 136H1527Z"/><path d="M1500 136H1515L1513.500 154H1497.500ZM1527 136H1541.500L1544.500 154H1528.500Z"/><rect x="1516.500" y="124" width="8.500" height="11" /><rect x="1518.500" y="127" width="4.500" height="5" fill="#333"/></g>
<path d="M1515.0 197.25L1520 202.75L1525.0 197.25" fill="none" stroke="#f0f0f0" stroke-width="2.4"/>
<circle cx="1624.200" cy="123.100" r="17.600" fill="#c9822a"/>
<path d="M1624.200 123.100L1611.500 111A17.600 17.600 0 0 1 1635.300 109.400Z" fill="#3d9fe0"/><path d="M1624.200 123.100L1635.300 109.400A17.600 17.600 0 0 1 1641.400 127Z" fill="#d9542a"/><path d="M1624.200 123.100L1641.400 127A17.600 17.600 0 0 1 1636.500 135.800Z" fill="#e8c22e"/>
<path d="M1624.200 123.100L1611.500 111M1624.200 123.100L1635.300 109.400M1624.200 123.100L1641.400 127M1624.200 123.100L1636.500 135.800" stroke="#333" stroke-width="1.300"/>
<circle cx="1599.900" cy="123.100" r="7.600" fill="#333"/><path d="M1587 131H1613.500V150H1609V159H1591.500V150H1587Z" fill="#333"/>
<circle cx="1599.900" cy="123.100" r="5.600" fill="#1c5f96" stroke="#3d9fe3" stroke-width="1.900"/>
<path d="M1592 132.500H1608Q1611.700 132.500 1611.700 136V147.500H1607.500V156.500H1592.800V147.500H1589V136Q1589 132.500 1592 132.500Z" fill="#1c5f96" stroke="#3d9fe3" stroke-width="1.900"/><path d="M1592.800 139V147.500M1607.500 139V147.500" stroke="#3d9fe3" stroke-width="1.500"/>
<path d="M1609.0 197.25L1614 202.75L1619.0 197.25" fill="none" stroke="#f0f0f0" stroke-width="2.4"/>
<path d="M1712.700 127V153.300" stroke="#c8c8c8" stroke-width="1.800"/><circle cx="1712.700" cy="119.400" r="8.600" fill="#d9542a"/>
<rect x="1732.500" y="122.800" width="21.800" height="12.600" fill="none" stroke="#b8b8b8" stroke-width="1.700"/><rect x="1732.500" y="141.300" width="21.800" height="13" fill="none" stroke="#b8b8b8" stroke-width="1.700"/>
<path d="M1737 127.300H1750M1737 131H1750M1737 146H1750M1737 149.800H1750" stroke="#b8b8b8" stroke-width="1.500"/>
<path d="M1729 130C1722 131.500 1718.500 139 1721 145C1722 148 1724 150 1726.500 151.500" fill="none" stroke="#3d9fe3" stroke-width="2.400"/><path d="M1720.500 152.500H1728.500V144.500" fill="none" stroke="#3d9fe3" stroke-width="2.400"/>
<path d="M1817.5 119.5L1829 107.5L1839.5 116.0V125.5L1828.5 128.5L1818.5 127.5Z" fill="#a86e24" stroke="#e09a3c" stroke-width="1.800" stroke-linejoin="round"/>
<path d="M1826 115.5L1833 121.0M1828.5 113.0L1835.5 118.5" stroke="#8a5a1c" stroke-width="1.400"/>
<circle cx="1823.5" cy="123.5" r="2.600" fill="#333" stroke="#e09a3c" stroke-width="1.500"/>
<path d="M1822.5 125.0C1821 128.5 1819 131.0 1816 130.0" fill="none" stroke="#9a9a9a" stroke-width="1.300"/>
<rect x="1831.500" y="119.800" width="5.400" height="13.500" fill="#c4c4c4" stroke="#333" stroke-width="0.800"/><rect x="1837.800" y="119.800" width="5.400" height="13.500" fill="#c4c4c4" stroke="#333" stroke-width="0.800"/>
<path d="M1914.5 119.5L1926 107.5L1936.5 116.0V125.5L1925.5 128.5L1915.5 127.5Z" fill="#a86e24" stroke="#e09a3c" stroke-width="1.800" stroke-linejoin="round"/>
<path d="M1923 115.5L1930 121.0M1925.5 113.0L1932.5 118.5" stroke="#8a5a1c" stroke-width="1.400"/>
<circle cx="1920.5" cy="123.5" r="2.600" fill="#333" stroke="#e09a3c" stroke-width="1.500"/>
<path d="M1919.5 125.0C1918 128.5 1916 131.0 1913 130.0" fill="none" stroke="#9a9a9a" stroke-width="1.300"/>
<path d="M1929.500 126V122.500Q1929.500 119 1932.500 119Q1935.500 119 1935.500 122.500V126" fill="none" stroke="#333" stroke-width="4"/><path d="M1929.500 126V122.500Q1929.500 119 1932.500 119Q1935.500 119 1935.500 122.500V126" fill="none" stroke="#e09a3c" stroke-width="1.800"/><rect x="1926.800" y="125.200" width="11.400" height="8.200" rx="1" fill="#e09a3c" stroke="#333" stroke-width="0.800"/><rect x="1931.800" y="127.500" width="1.500" height="3.600" fill="#333"/>
<path d="M1817.5 159.5L1829 147.5L1839.5 156.0V165.5L1828.5 168.5L1818.5 167.5Z" fill="#a86e24" stroke="#e09a3c" stroke-width="1.800" stroke-linejoin="round"/>
<path d="M1826 155.5L1833 161.0M1828.5 153.0L1835.5 158.5" stroke="#8a5a1c" stroke-width="1.400"/>
<circle cx="1823.5" cy="163.5" r="2.600" fill="#333" stroke="#e09a3c" stroke-width="1.500"/>
<path d="M1822.5 165.0C1821 168.5 1819 171.0 1816 170.0" fill="none" stroke="#9a9a9a" stroke-width="1.300"/>
<path d="M1830.500 160.500L1841.500 172.500M1841.500 160.500L1830.500 172.500" stroke="#333" stroke-width="4.600"/><path d="M1830.500 160.500L1841.500 172.500M1841.500 160.500L1830.500 172.500" stroke="#e8623a" stroke-width="2.800"/>
<path d="M1818.5 199.5L1830 187.5L1840.5 196.0V205.5L1829.5 208.5L1819.5 207.5Z" fill="#a86e24" stroke="#e09a3c" stroke-width="1.800" stroke-linejoin="round"/>
<path d="M1827 195.5L1834 201.0M1829.5 193.0L1836.5 198.5" stroke="#8a5a1c" stroke-width="1.400"/>
<circle cx="1824.5" cy="203.5" r="2.600" fill="#333" stroke="#e09a3c" stroke-width="1.500"/>
<path d="M1823.5 205.0C1822 208.5 1820 211.0 1817 210.0" fill="none" stroke="#9a9a9a" stroke-width="1.300"/>
<path d="M1827.500 201V212H1843V202.500H1831Z" fill="#333" stroke="#c0c0c0" stroke-width="1.500"/><path d="M1830 205.200h1.500M1830 208.800h1.500M1833.500 205.200h7M1833.500 208.800h7" stroke="#c0c0c0" stroke-width="1.400"/>
<path d="M1906.5 197.5L1911 202.5L1915.5 197.5" fill="none" stroke="#f0f0f0" stroke-width="2.4"/>
<path d="M2015 106H2043.500L2054 113.500V125.500L2043.500 132.500H2015Q2012.500 132.500 2012.500 130V108.500Q2012.500 106 2015 106Z" fill="#a86e24" stroke="#e09a3c" stroke-width="2"/>
<path d="M2018 112.500H2035M2018 118H2035M2018 123.500H2030" stroke="#7a4f18" stroke-width="1.700"/>
<circle cx="2045.800" cy="119.700" r="3.600" fill="#333" stroke="#e09a3c" stroke-width="1.800"/><path d="M2046 120L2056 125.500C2058 127 2057 130 2055.500 130.500" fill="none" stroke="#a0a0a0" stroke-width="1.500"/>
<path d="M2010.500 137.500H2022L2030.500 126.500L2029.500 137.500H2035.500Q2038.500 137.500 2038.500 140.500V154Q2038.500 157 2035.500 157H2010.500Q2007.500 157 2007.500 154V140.500Q2007.500 137.500 2010.500 137.500Z" fill="#333" stroke="#b0b0b0" stroke-width="1.700" stroke-linejoin="round"/>
<path d="M2017 153L2023 140.500L2029 153M2019 149H2027" fill="none" stroke="#b8b8b8" stroke-width="1.900"/>
<path d="M2026.0 197.25L2031 202.75L2036.0 197.25" fill="none" stroke="#f0f0f0" stroke-width="2.4"/>
<rect x="2123" y="108" width="48" height="48" fill="#474747" stroke="#5c5c5c" stroke-width="2"/>
<path d="M2145 112C2150 118 2143 126 2147 134C2150 142 2144 148 2146 155H2170V109H2148Z" fill="#3f3f3f"/>
<path d="M2120.500 119H2133M2140.500 119H2153" stroke="#5c5c5c" stroke-width="2.200"/><path d="M2133.500 113.500V124.500M2140 113.500V124.500" stroke="#5c5c5c" stroke-width="2.600"/>
<path d="M2158.800 131H2166.800V143.500L2171.500 139L2174 146L2162.800 158L2151.600 146L2154 139L2158.800 143.500Z" fill="#666" stroke="#333" stroke-width="0.800"/>
<path d="M2164.5 197.5L2169 202.5L2173.5 197.5" fill="none" stroke="#9a9a9a" stroke-width="2.2"/>
<rect x="2202.8" y="107.8" width="24.400" height="24.400" fill="#454545" stroke="#5c5c5c" stroke-width="1.600"/>
<path d="M2201 115H2209M2215 115H2221.5" stroke="#5c5c5c" stroke-width="1.600"/><path d="M2209.5 111V119M2214.5 111V119" stroke="#5c5c5c" stroke-width="1.900"/>
<rect x="2216" y="121" width="14" height="14" fill="#333"/><path d="M2218 127.500A5 5 0 0 1 2227 124.500M2228 129A5 5 0 0 1 2219 131.500" fill="none" stroke="#5c5c5c" stroke-width="2"/><path d="M2224.500 124.800H2228V121.300M2221.500 131.300H2218V134.800" fill="none" stroke="#5c5c5c" stroke-width="1.600"/>
<rect x="2202.8" y="148.10000000000002" width="24.400" height="24.400" fill="#454545" stroke="#5c5c5c" stroke-width="1.600"/>
<path d="M2201 155.3H2209M2215 155.3H2221.5" stroke="#5c5c5c" stroke-width="1.600"/><path d="M2209.5 151.3V159.3M2214.5 151.3V159.3" stroke="#5c5c5c" stroke-width="1.900"/>
<rect x="2217" y="162" width="13" height="13" fill="#333"/><path d="M2219 164L2228 173M2228 164L2219 173" stroke="#5c5c5c" stroke-width="2.400"/>
<path d="M505.75 289.8L511.5 295.8L517.25 289.8" fill="none" stroke="#e0e0e0" stroke-width="2.2"/>
<path d="M537.8 284.3H544.8V293.3H537.8ZM535.3 293.3H547.3M541.3 293.3V300.3" fill="none" stroke="#e0e0e0" stroke-width="1.900"/><path d="M543.6999999999999 284.3V293.3" stroke="#e0e0e0" stroke-width="2.600"/>
<path d="M564.7 284.8L578.7 298.8M578.7 284.8L564.7 298.8" stroke="#e0e0e0" stroke-width="1.900"/>
<path d="M3102.75 289.8L3108.5 295.8L3114.25 289.8" fill="none" stroke="#e0e0e0" stroke-width="2.2"/>
<path d="M3134.3 284.3H3141.3V293.3H3134.3ZM3131.8 293.3H3143.8M3137.8 293.3V300.3" fill="none" stroke="#e0e0e0" stroke-width="1.900"/><path d="M3140.2000000000003 284.3V293.3" stroke="#e0e0e0" stroke-width="2.600"/>
<path d="M3161.5 284.8L3175.5 298.8M3175.5 284.8L3161.5 298.8" stroke="#e0e0e0" stroke-width="1.900"/>
<path d="M18.5 329H39.5V331.5L31.2 341.24V354.5H26.8V341.24L18.5 331.5Z" fill="none" stroke="#a4a4a4" stroke-width="2" stroke-linejoin="round"/><path d="M19.5 330.5H38.5L29.0 339.71Z" fill="#a4a4a4" opacity="0.450"/>
<circle cx="535.5" cy="337.8" r="5.2" fill="none" stroke="#c8c8c8" stroke-width="2"/><path d="M531.86 341.44L524.86 348.44" stroke="#c8c8c8" stroke-width="2.6"/>
<path d="M563.55 340.75L568.8 346.25L574.05 340.75" fill="none" stroke="#d0d0d0" stroke-width="2"/>
<path d="M51.900 391.700V410.800H67.300M51.900 397.200H67.300" fill="none" stroke="#d0d0d0" stroke-width="1.600"/>
<path d="M47.500 378.400H57L59.600 385.400H44.900ZM44.900 387.400H59.600V391.700H44.900Z" fill="#e3c337"/>
<path d="M69.500 393H79.500L82 397.800H67.300ZM67.300 399H82V401.800H67.300Z" fill="#e3c337"/><path d="M69.500 406.600H79.500L82 411.400H67.300ZM67.300 412.600H82V415.400H67.300Z" fill="#e3c337"/>
<path d="M100.300 388V405C100.300 414.500 132 414.500 132 405V388" fill="#484848" stroke="#b4b4b4" stroke-width="1.800"/><ellipse cx="116.150" cy="388" rx="15.850" ry="6.600" fill="#3c3c3c" stroke="#b4b4b4" stroke-width="1.800"/>
<rect x="154" y="380.3" width="32" height="32" rx="3" fill="#8c8c8c" stroke="#ababab" stroke-width="1.400"/>
<path d="M154.7 383.3Q154.7 381.0 157 381.0H164.5C165.5 389.3 172 393.3 173.5 399.3C174.5 405.3 175.5 408.3 176.5 411.6H157Q154.7 411.6 154.7 409.3Z" fill="#17bff0"/>
<path d="M164.5 381.0C165.5 389.3 172 393.3 173.5 399.3C174.5 405.3 175.5 408.3 176.5 411.6M173 397.3C175 392.3 180 389.8 185.3 389.3" fill="none" stroke="#1d5876" stroke-width="1.300"/>
<path d="M207.700 411.900L210.300 404L232.500 381.800L237.800 387.100L215.600 409.300Z" fill="#e3c337"/><path d="M207.700 411.900L210.300 404L215.600 409.300Z" fill="#d8b98a"/><path d="M207.700 411.900L208.700 408.800L210.800 410.900Z" fill="#444"/>
<path d="M232.500 381.800L234.800 379.500Q236 378.500 237.200 379.600L240 382.400Q241 383.600 240 384.800L237.800 387.100Z" fill="#e8784a"/><path d="M231 383.300L236.300 388.600" stroke="#b89a28" stroke-width="1.400"/>
<path d="M259.300 379.500H286V406H259.300ZM272.650 379.500V406M259.300 392.750H286" fill="none" stroke="#8c8c8c" stroke-width="1.600"/>
<rect x="275" y="394.500" width="22" height="22" fill="#333"/><path d="M285.500 395.500V416M275.500 405.700H296" stroke="#3d8fd8" stroke-width="3.200"/><path d="M285.500 395.500V416M275.500 405.700H296" stroke="#9ccaf0" stroke-width="0.900"/>
<path d="M316 399L333.500 379.500Q335 378.300 336.500 379.500L347.500 390.500Q348.500 392 347.500 393L330 412.500L318 414Q315.500 414 315.500 411.500Z" fill="#b07428" stroke="#e09a3c" stroke-width="1.800" stroke-linejoin="round"/>
<path d="M327 392L336 401M330.500 388.500L339.500 397.500M334 385L343 394" stroke="#7a4f18" stroke-width="1.300"/>
<circle cx="322.500" cy="405.500" r="3.100" fill="#333" stroke="#e09a3c" stroke-width="1.700"/><path d="M321.500 406.500C320.500 411 318.500 414.500 314 413" fill="none" stroke="#a8a8a8" stroke-width="1.400"/>
<rect x="35.3" y="499.8" width="26" height="25" fill="#3fa046" stroke="#c8c8c8" stroke-width="1.700"/>
<path d="M51.42 500.8L48.3 509.8L43.879999999999995 512.8L45.699999999999996 517.8L43.099999999999994 523.8H51.42L54.019999999999996 519.8L60.3 517.8V500.8Z" fill="#1f6fb4"/><path d="M51.42 514.8L60.3 512.3V523.8H49.599999999999994Z" fill="#3fa046"/>
<rect x="614.8" y="273.3" width="25.5" height="24.5" fill="#3fa046" stroke="#c8c8c8" stroke-width="1.700"/>
<path d="M630.6099999999999 274.3L627.55 283.1L623.2149999999999 286.04L625.0 290.94L622.4499999999999 296.8H630.6099999999999L633.16 292.90000000000003L639.3 290.94V274.3Z" fill="#1f6fb4"/><path d="M630.6099999999999 288.0L639.3 285.55V296.8H628.8249999999999Z" fill="#3fa046"/>
<path d="M16 517H26.5V506Z" fill="#b0b0b0"/>
<path d="M34.3 557H44.8V546Z" fill="#b0b0b0"/>
<rect x="53.300" y="541.800" width="22" height="22" rx="2.500" fill="#262626" stroke="#8a8a8a" stroke-width="1.600"/><path d="M57.500 552.500L62.500 558L71.500 546.500" fill="none" stroke="#e8e8e8" stroke-width="3"/>
<path d="M704.500 277.500L719.500 292.500M719.500 277.500L704.500 292.500" stroke="#e0e0e0" stroke-width="1.800"/>
<path d="M2588.0 282.0L2593.5 288.0L2599.0 282.0" fill="none" stroke="#c8c8c8" stroke-width="2"/>
<path d="M2642.5 437.3L2650.0 443.8L2642.5 450.3Z" fill="none" stroke="#c0c0c0" stroke-width="1.500" stroke-linejoin="round"/>
<path d="M2663 435.7Q2663 434.2 2664.5 434.2L2671 433.2L2674 435.4H2687Q2688 435.4 2688 436.7V453.7H2663Z" fill="#e6c838"/>
<path d="M2665.4 437.5H2685.8V440.0H2665.4Z" fill="#2e2e2e"/>
<rect x="2666.500" y="441" width="18" height="14" fill="#333"/>
<rect x="2668.3" y="442.4" width="14.6" height="13.6" fill="#3fa046" stroke="#c8c8c8" stroke-width="1.700"/>
<path d="M2677.3520000000003 443.4L2675.6000000000004 447.84L2673.1180000000004 449.472L2674.1400000000003 452.19199999999995L2672.6800000000003 455.0H2677.3520000000003L2678.8120000000004 453.28L2681.9 452.19199999999995V443.4Z" fill="#1f6fb4"/><path d="M2677.3520000000003 450.56L2681.9 449.2V455.0H2676.3300000000004Z" fill="#3fa046"/>
<path d="M2642.5 477.3L2650.0 483.8L2642.5 490.3Z" fill="none" stroke="#c0c0c0" stroke-width="1.500" stroke-linejoin="round"/>
<path d="M2663 475.7Q2663 474.2 2664.5 474.2L2671 473.2L2674 475.4H2687Q2688 475.4 2688 476.7V493.7H2663Z" fill="#e6c838"/>
<path d="M2665.4 477.5H2685.8V480.0H2665.4Z" fill="#2e2e2e"/>
<path d="M2674 485V482.500H2680V485" fill="none" stroke="#c9c9c9" stroke-width="1.500"/><rect x="2667.500" y="484.500" width="20" height="12.200" rx="1" fill="#d0421a" stroke="#333" stroke-width="0.800"/><path d="M2667.500 490H2687.500" stroke="#7a2208" stroke-width="1.400"/><rect x="2675.500" y="488.800" width="4" height="2.600" fill="#e0e0e0"/>
<path d="M2638.2 528.5H2648.7V517.5Z" fill="#c0c0c0"/>
<path d="M2663 515.7Q2663 514.2 2664.5 514.2L2671 513.2L2674 515.4000000000001H2687Q2688 515.4000000000001 2688 516.7V533.7H2663Z" fill="#e6c838"/>
<path d="M2665.4 517.5H2685.8V520.0H2665.4Z" fill="#2e2e2e"/>
<path d="M2666.500 522.500H2685V534H2666.500Z" fill="#333"/><path d="M2668.400 526.500V533C2668.400 537.500 2683.200 537.500 2683.200 533V526.500" fill="#3c3c3c" stroke="#b0b0b0" stroke-width="1.500"/><ellipse cx="2675.800" cy="526.500" rx="7.400" ry="3.200" fill="#3c3c3c" stroke="#b0b0b0" stroke-width="1.500"/>
<path d="M2664.9 568.5H2675.4V557.5Z" fill="#b4b4b4"/>
<path d="M2694 557.500V568C2694 573.500 2712 573.500 2712 568V557.500" fill="#333" stroke="#9a9a9a" stroke-width="1.500"/><ellipse cx="2703" cy="557.500" rx="9" ry="3.800" fill="#333" stroke="#9a9a9a" stroke-width="1.500"/>
<path d="M2711.600 562.500L2702.300 571.800L2704.300 573.800V580.500H2719V573.800L2721 571.800Z" fill="#2a2a2a" stroke="#f2f2f2" stroke-width="1.800" stroke-linejoin="round"/><rect x="2712.500" y="573" width="4" height="7" fill="#d88a38"/><rect x="2706.800" y="573" width="3.200" height="3.200" fill="#8ab4d8"/>
<rect x="2717.800" y="593" width="24.300" height="18.800" rx="3" fill="#3a3a3a" stroke="#c4c4c4" stroke-width="1.600"/><path d="M2722 597H2738V608H2722Z" fill="#6a6a6a"/><path d="M2738 597L2729 603L2732 608M2729 603L2722 600.500" fill="none" stroke="#3a3a3a" stroke-width="1.300"/>
<path d="M2642.5 637.3L2650.0 643.8L2642.5 650.3Z" fill="none" stroke="#c0c0c0" stroke-width="1.500" stroke-linejoin="round"/>
<path d="M2663 636.0Q2663 634.5 2664.5 634.5L2671 633.5L2674 635.7H2687Q2688 635.7 2688 637.0V654.0H2663Z" fill="#e6c838"/>
<path d="M2665.4 637.8H2685.8V640.3H2665.4Z" fill="#2e2e2e"/>
<path d="M2667 645.500C2669 641.500 2677 640 2682 642.500C2686 644.500 2686 648 2683 648.500C2680 649 2680.500 651 2682 652C2679 655 2670 655 2667.500 651.500C2666.500 649.500 2666.500 647 2667 645.500Z" fill="#4a4a4a" stroke="#c8c8c8" stroke-width="1.300"/>
<circle cx="2671" cy="647" r="1.300" fill="#4aa6e2"/><circle cx="2675" cy="644.500" r="1.300" fill="#4aa84a"/><circle cx="2679.500" cy="645" r="1.300" fill="#e8c83a"/><path d="M2675.500 653.500L2686.500 645.500" stroke="#c8c8c8" stroke-width="2"/><path d="M2673.500 655.500L2676.500 652.500" stroke="#e8784a" stroke-width="2.400"/>
<path d="M2642.5 677.3L2650.0 683.8L2642.5 690.3Z" fill="none" stroke="#c0c0c0" stroke-width="1.500" stroke-linejoin="round"/>
<path d="M2663 676.5Q2663 675 2664.5 675L2671 674L2674 676.2H2687Q2688 676.2 2688 677.5V694.5H2663Z" fill="#e6c838"/>
<path d="M2665.4 678.3H2685.8V680.8H2665.4Z" fill="#2e2e2e"/>
<path d="M2674.500 686.500L2683.500 691.200L2674.500 696Z" fill="#b0b0b0" stroke="#333" stroke-width="1"/>
<path d="M2642.5 717.3L2650.0 723.8L2642.5 730.3Z" fill="none" stroke="#c0c0c0" stroke-width="1.500" stroke-linejoin="round"/>
<path d="M2663 715.0Q2663 713.5 2664.5 713.5L2671 712.5L2674 714.7H2687Q2688 714.7 2688 716.0V733.0H2663Z" fill="#e6c838"/>
<path d="M2665.4 716.8H2685.8V719.3H2665.4Z" fill="#2e2e2e"/>
<path d="M2666 727.500L2674 719L2682 727.500Z" fill="#d8421a"/><rect x="2669" y="727" width="10" height="7.500" fill="#e8e8e8"/><rect x="2672" y="729" width="4" height="4" fill="#3d9fe3"/><path d="M2667 735.500H2681" stroke="#4aa84a" stroke-width="1.500"/>
<circle cx="2643.500" cy="394" r="14" fill="none" stroke="#585858" stroke-width="1.800"/><path d="M2635.500 394H2652M2642 387.500L2635.500 394L2642 400.500" fill="none" stroke="#585858" stroke-width="2.600"/>
<path d="M2675 394.500L2683 386.500L2691 394.500M2677 393V402.500H2689V393M2686.500 388V385.500" fill="none" stroke="#707070" stroke-width="1.500"/><rect x="2681" y="396.500" width="3.200" height="6" fill="#707070"/><path d="M2674 403.500H2692" stroke="#4a7a4a" stroke-width="1.400"/>
<path d="M2706 380.5H2728V383.0L2719.2 392.98V406.5H2714.8V392.98L2706 383.0Z" fill="none" stroke="#d0d0d0" stroke-width="1.9" stroke-linejoin="round"/><path d="M2707 382.0H2727L2717.0 391.42Z" fill="#d0d0d0" opacity="0.450"/>
<circle cx="3129.8" cy="387.5" r="5.4" fill="none" stroke="#d0d0d0" stroke-width="2"/><path d="M3126.02 391.28L3119.02 398.28" stroke="#d0d0d0" stroke-width="2.6"/>
<path d="M3157.0 390.25L3162.5 395.75L3168.0 390.25" fill="none" stroke="#d0d0d0" stroke-width="2"/>
<path d="M765 1764.500H771.500L768.250 1769Z" fill="#c8c8c8"/>
<path d="M798.800 1753.300H815.500V1769H798.800ZM807.150 1753.300V1769M798.800 1761.150H815.500" fill="none" stroke="#8a8a8a" stroke-width="1.500"/><rect x="809.500" y="1762.500" width="16.500" height="17" fill="#333"/><path d="M817.500 1763.500V1779M810 1771.200H825.500" stroke="#3d8fd8" stroke-width="3"/><path d="M817.500 1763.500V1779M810 1771.200H825.500" stroke="#a8d0f0" stroke-width="0.800"/>
<path d="M834.0 1754.500V1774.500M834 1754.5H854.400M839.1 1754.500V1774.500M834 1759.5H854.400M844.2 1754.500V1774.500M834 1764.5H854.400M849.3 1754.500V1774.500M834 1769.5H854.400M854.4 1754.500V1774.500M834 1774.5H854.400" stroke="#8a8a8a" stroke-width="1.500" fill="none"/>
<path d="M866 1778.500H891V1774Z" fill="#2b78c8"/><rect x="864.800" y="1775.500" width="4.200" height="4.200" fill="#2e2e2e" stroke="#5fc04a" stroke-width="1.300"/>
<path d="M869 1772L882 1759" stroke="#3d9fe3" stroke-width="1.700" stroke-dasharray="3 1.500"/><path d="M868.500 1767.500V1772.500H873.500M877.500 1758.500H882.500V1763.500" fill="none" stroke="#3d9fe3" stroke-width="1.700"/>
<rect x="865.500" y="1755.500" width="6" height="3.200" fill="none" stroke="#d0d0d0" stroke-width="1.300"/><rect x="884" y="1767" width="6.500" height="3.600" fill="none" stroke="#d0d0d0" stroke-width="1.300"/><path d="M884 1757.500H891.500M887.750 1753.800V1761.200" stroke="#d0d0d0" stroke-width="1.400"/>
<rect x="898.500" y="1752.500" width="11.500" height="11.500" fill="#2f6a2f"/><path d="M911.500 1752V1779M898 1765H924.500" stroke="#a8a8a8" stroke-width="1.400" stroke-dasharray="1.500 1.800"/><rect x="909.500" y="1763" width="4" height="4" fill="#a8a8a8"/>
<path d="M932.500 1770V1759.500L940.500 1770V1759.500" fill="none" stroke="#3d9fe3" stroke-width="2.800" stroke-linejoin="miter"/><path d="M943.800 1752.500V1779L957 1766.500" fill="none" stroke="#c0c0c0" stroke-width="1.400"/><path d="M948 1754.500C953 1755 955.500 1758 955 1762.500" fill="none" stroke="#3d9fe3" stroke-width="2"/><path d="M951 1759.500L955 1763.500L958.500 1759" fill="none" stroke="#3d9fe3" stroke-width="1.900"/>
<path d="M969.95 1764.25L975.7 1770.75L981.45 1764.25" fill="none" stroke="#f0f0f0" stroke-width="2.2"/>
<path d="M1742.0 1764.25L1748.5 1771.75L1755.0 1764.25" fill="none" stroke="#a8a8a8" stroke-width="3"/>
<rect x="2247" y="1755" width="16.500" height="15" fill="#4a6a80" stroke="#6a6a6a" stroke-width="1"/><path d="M2251 1756L2255 1763L2254 1769M2262 1757C2259 1758 2256.500 1760 2255 1763" fill="none" stroke="#2a4050" stroke-width="1.200"/><circle cx="2244.500" cy="1769.500" r="6.200" fill="#2c2c2c" stroke="#3a7ca5" stroke-width="1.600"/><path d="M2241 1769.500H2248M2244.500 1766V1773" stroke="#9a6a5a" stroke-width="1.400"/><path d="M2249.500 1774.500L2256 1780.500" stroke="#8a6a50" stroke-width="2"/>
<rect x="2476.500" y="1758.500" width="20" height="19.500" rx="1.500" fill="#585858"/><path d="M2481 1760L2486 1768V1777M2494 1762C2490 1763 2487 1765.500 2486 1768" fill="none" stroke="#404040" stroke-width="1.300"/>
<path d="M2574.500 1765A10.500 10.500 0 0 1 2593.500 1760M2594.500 1768.500A10.500 10.500 0 0 1 2575.500 1773.500" fill="none" stroke="#3d9fe3" stroke-width="3.800"/><path d="M2588 1761.500H2597V1752.500ZM2581 1772H2572V1781Z" fill="#3d9fe3"/>
<path d="M1321.6 1462.3L1318.1 1458.9L1314.7 1446.8L1307.8 1438.2L1300.9 1429.5L1295.7 1420.9L1290.5 1412.3L1288.8 1405.4L1278.4 1403L1268.1 1405.4L1259.5 1408.8L1256 1414L1250.8 1408.8L1240.5 1407.1L1233.6 1401.9L1228.4 1393.3L1223.2 1396.8L1219.8 1386.4L1218.1 1376.1L1214.6 1365.7L1212.2 1353.6L1211.2 1341.5L1209.4 1331.2L1207.7 1320.8L1202.5 1310.5L1200.8 1300.1L1198.4 1288.1L1195.6 1276L1192.2 1265.6L1185.3 1255.3L1176.7 1250L1171.5 1240L1164.6 1229.6L1156 1221L1157.7 1212.4L1156 1198.6L1155 1181.3L1154.3 1164.1L1156 1146.8L1159.5 1133L1166.4 1120.9L1175 1110.6L1185.3 1102L1195.7 1091.6L1206.1 1084.7L1214.7 1077.8L1219.9 1067.5L1225 1057.1L1226.8 1043.3L1226.1 1026.1L1223.3 1008.8L1219.9 991.5L1214.7 974.3L1207.8 957L1199.2 938.1L1188.8 920.8L1178.4 905.3L1168.1 891.5L1154.3 877.7L1140.5 865.6L1126.7 855.2L1112.9 844.9L1099.1 834.5L1085.3 822.5L1071.5 810.4L1057.7 801.8L1043.9 797.6L1031.8 798.3L1024.9 805.2L1020.4 817.3L1019 808.7L1016.3 798.3L1014.5 784.5L1019.7 774.2L1023.2 763.8L1021.4 750L1019.8 745.1L1016.3 731.3L1007.7 719.3L997.3 708.9L983.5 696.8L966.3 688.2L949 679.6L931.8 672.7L918 666.5L909.3 660.6L911.1 645.1L914.5 627.8L919.7 610.6L923.1 599.5L930 597.4L936.9 603.7L945.6 607.1L955.9 605.4L969.7 596.8L983.5 586.4L997.3 572.6L1011.1 557.1L1021.5 545L1031.8 527.7L1042.2 507L1050.8 488.1L1057.7 469.1L1059.4 451.8L1061.2 434.6L1062.9 419L1066.3 409.7L1071.5 411.1L1080.1 420.8L1088.8 427.7L1097.4 425.9L1106 422.5L1114.6 428.4L1125 436.3L1135.3 443.2L1149.2 449.1L1163 453.6L1176.8 458.7L1190.6 462.2L1200.9 461.5L1214.7 455.3L1228.5 446.7L1238.9 432.9L1250.9 419L1259.6 403.5L1266.5 386.3L1271.6 372.5L1282 362.1L1292.4 351.8L1307.9 346.6L1320 339.7L1328.6 331.1L1338.9 332.8L1349.3 337.3L1363.1 338.6L1380 340.7L1380 340.7L1393.8 343.1L1407.6 351.1L1421.4 352.4L1428.3 367.3L1438.7 374.2L1454.2 389L1469.7 386.3L1481.8 394.9L1492.1 410.4L1502.5 425.9L1512.9 430.4L1524.9 439.8L1535.3 446.7L1545.6 450.1L1559.4 451.8L1573.2 450.8L1587 451.8L1595.7 451.8L1600.8 463.9L1609.5 469.1L1618.1 474.3L1628.4 481.2L1638.8 482.9L1649.2 479.4L1659.5 482.9L1673.3 481.2L1683.7 481.2L1697.5 493.2L1711.3 500.1L1725.1 505.3L1738.9 513.9L1752.7 519.1L1766.5 524.3L1776.8 532.9L1780 538L1797.3 544.9L1811.1 555.3L1824.9 569.1L1835.2 579.4L1843.8 595L1855.9 607L1869.7 615.7L1883.5 622.6L1900.8 624.3L1918 619.1L1931.8 615.7L1942.2 603.6L1947.4 595L1938.7 588.1L1924.9 577.7L1911.1 569.1L1897.3 562.2L1878.3 558L1890.4 550.1L1900.8 541.5L1914.6 538L1924.9 531.1L1931.8 524.2L1942.2 522.5L1952.5 527.7L1962.9 534.6L1975 538L1980.1 536.3L1990.5 541.5L2004.3 539.8L2018.1 537.3L2026.7 538L2027.8 551.8L2026.7 562.2L2033.6 563.9L2025 570.8L2019.8 579.4L2023.3 588.1L2031.9 593.2L2042.2 598.4L2052.6 600.1L2057.8 607L2059.5 613.9L2052.6 617.4L2045.7 624.3L2037.1 631.2L2021.5 636.4L2007.7 638.1L1995.7 639.8L1988.8 634.6L1976.7 636.4L1968.1 634.6L1966.3 645L1968.1 655.3L1959.4 660.5L1956.7 669.2L1962.9 676.1L1961.2 683L1969.8 688.1L1983.6 684.7L1993.9 686.4L2004.3 689.9L2014.6 688.1L2025 686.4L2031.9 693.3L2038.8 700.2L2045.7 707.1L2052.6 714L2057.8 720.9L2057.8 731.3L2054.3 739.9L2045.7 745.1L2033.6 745.1L2026.7 750.2L2025 758.9L2031.9 765.8L2042.2 770.9L2052.6 777.8L2056.1 783L2050.9 793.4L2045.7 802L2044 810.6L2049.2 819.3L2047.4 829.6L2045.7 840L2050.9 848.6L2059.5 855.5L2068.1 860.7L2063 869.3L2061.2 883.1L2056.1 893.4L2052.6 900L2052.6 900.1L2056.1 907L2066.4 912.1L2076.8 915.6L2087.1 920.8L2097.5 927.7L2111.3 931.1L2125.1 932.9L2130.2 941.5L2137.1 950.1L2145.8 951.8L2150.9 957L2163 958L2176.8 959.4L2188.9 953.6L2199.3 953.6L2207.9 957L2207.9 969.1L2202.7 979.4L2194.1 988.1L2187.2 995L2173.4 995L2159.6 991.5L2145.8 991.5L2135.4 996.7L2125.1 1000.1L2116.4 996.7L2106.1 996.7L2100.9 1005.3L2092.3 1010.5L2083.7 1013.9L2083 1020.8L2090.6 1022.6L2099.2 1020.8L2102.6 1027.7L2095.7 1031.2L2104.4 1034.6L2107.8 1038.1L2097.5 1039.8L2083.7 1038.1L2069.9 1039.8L2061.2 1043.3L2056.1 1051.9L2061.2 1057.1L2068.1 1060.5L2068.1 1069.2L2064.7 1074.3L2056.1 1076.1L2052.6 1077.8L2045.7 1072.6L2037.1 1067.4L2033.6 1062.2L2040.5 1057.1L2038.8 1051.2L2033.6 1053.6L2028.4 1058.8L2021.5 1055.3L2018.1 1048.4L2021.5 1041.5L2016.4 1036.4L2006 1034.6L1995.7 1031.9L1991.2 1024.3L1992.2 1013.9L1993.9 1007L2004.3 1003.6L2014.6 998.4L2019.8 989.8L2026.7 988.1L2033.6 988.1L2028.4 981.2L2026.7 972.5L2021.5 965.6L2011.2 962.2L2000.8 962.2L1990.5 958.7L1983.6 951.8L1981.9 944.9L1975 946.7L1966.3 950.1L1961.2 955.3L1956 948.4L1952.5 938L1949.1 927.7L1943.9 919L1935.3 915.6L1924.9 913.9L1921.5 908.7L1912.9 903.5L1902.5 901.8L1900.8 907L1890.4 907.7L1881.8 910.4L1876.6 919L1881.8 924.9L1873.2 919L1866.3 910.4L1857.6 903.5L1854.2 896.6L1847.3 888L1843.8 877.6L1838.7 869L1828.3 864.9L1816.2 867.3L1805.9 874.2L1801.4 882.8L1803.5 894.9L1809.3 907L1808.3 920.8L1807.6 932.9L1814.5 944.9L1818 958.7L1824.9 972.5L1828.3 986.3L1821.4 995L1823.1 1003.6L1831.8 1008.8L1838.7 1017.4L1845.6 1029.5L1850.7 1041.5L1857.6 1055.3L1864.5 1067.4L1871.4 1081.2L1876.6 1093.3L1883.5 1105.4L1890.4 1114L1895.6 1126.1L1902.5 1139.9L1900.8 1152L1897.3 1162.3L1895.6 1176.1L1897.3 1189.9L1905.9 1198.6L1914.6 1196.8L1923.2 1193.4L1930.1 1196.8L1931.8 1208.9L1938.7 1217.5L1943.9 1227.9L1938.7 1231.3L1945.6 1241.7L1952.5 1255.5L1956 1269.3L1956 1283.1L1950.8 1293.4L1950.8 1300L1950.9 1300L1956.1 1300.4L1961.2 1312.5L1964.7 1326.3L1969.9 1340.1L1973.3 1353.9L1976.8 1367.7L1978.5 1378L1985.4 1386.7L1992.3 1397L1999.2 1409.1L2002.6 1419.4L2004.4 1428.1L2011.3 1436.7L2004.4 1443.6L1999.2 1450.5L2000.9 1460.8L1992.3 1464.3L1983.7 1459.1L1973.3 1464.3L1966.4 1471.2L1964.7 1481.5L1969.9 1491.9L1975 1497.1L1971.6 1505.7L1966.4 1516.1L1966.4 1529.9L1969.9 1540.2L1976.8 1550.6L1985.4 1562.6L1995.7 1573L2007.8 1581.6L2021.6 1588.5L2028.5 1598.9L2032 1605.8L2026.8 1616.1L2025.1 1626.5L2030.2 1633.4L2038.9 1640.3L2045.8 1648.9L2056.1 1655.8L2061.3 1662.7L2059.6 1671.3L2045.8 1671.3L2032 1669.6L2023.3 1676.5L2013 1671.3L2002.6 1667.9L1995.7 1661L1988.8 1648.9L1985.4 1636.8L1983.7 1626.5L1976.8 1616.1L1968.1 1609.9L1956.1 1607.5L1945.7 1610.9L1938.8 1617.8L1940.5 1629.9L1942.2 1643.7L1942.2 1655.8L1937.1 1648.9L1928.4 1643.7L1919.8 1645.5L1912.9 1650.6L1907.7 1645.5L1907.7 1636.8L1914.6 1629.9L1921.5 1623L1933.6 1617.8L1930.2 1610.9L1926.7 1598.9L1919.8 1588.5L1918.1 1578.2L1909.5 1566.1L1900.8 1555.7L1890.5 1547.1L1883.6 1536.8L1883.6 1523L1878.4 1512.6L1869.8 1502.2L1861.2 1495.3L1854.3 1495.3L1852.5 1509.2L1849.1 1516.1L1843.9 1505.7L1842.2 1495.3L1847.4 1485L1849.1 1471.2L1845.6 1460.8L1840.5 1450.5L1837 1440.1L1835.3 1428.1L1831.8 1417.7L1818 1412.5L1800.8 1411.8L1783.5 1412.5L1766.3 1411.5L1749 1410.8L1736.9 1412.5L1728.3 1419.4L1716.2 1426.3L1709.3 1433.2L1707.6 1443.6L1712.8 1453.9L1711.1 1462.6L1697.3 1466L1686.9 1472.9L1681.7 1485L1683.5 1497.1L1692.1 1504L1697.3 1516.1L1692.4 1519.5L1688.9 1512.6L1680.3 1507.4L1671.6 1510.9L1671.6 1519.5L1678.6 1528.1L1683.7 1536.8L1676.8 1545.4L1669.9 1548.8L1664.7 1541.9L1657.8 1541.9L1655.4 1554L1656.1 1567.8L1657.8 1581.6L1655.4 1595.4L1654.4 1605.8L1659.6 1616.1L1663 1626.5L1666.5 1640.3L1664.7 1654.1L1664.7 1667.9L1661.3 1678.2L1664.7 1688.6L1659.6 1693.8L1656.8 1702.4L1654.4 1692L1650.9 1681.7L1649.2 1671.3L1644 1661L1638.9 1654.1L1628.5 1648.9L1619.9 1643.7L1611.3 1636.8L1606.1 1642L1595.7 1636.8L1588.8 1626.5L1583.7 1616.1L1581.9 1605.8L1587.1 1600.6L1595.7 1595.4L1604.4 1592L1602.6 1581.6L1599.2 1571.3L1604.4 1564.4L1600.9 1554L1594 1547.1L1595.7 1536.8L1592.3 1526.4L1600.9 1521.2L1594 1512.6L1590.6 1502.2L1597.5 1495.3L1606.1 1486.7L1597.5 1486.7L1587.1 1488.4L1583.7 1478.1L1576.8 1464.3L1573.3 1450.5L1566.4 1436.7L1559.5 1426.3L1556.1 1412.5L1550.9 1398.7L1542.2 1388.4L1535.3 1376.3L1528.4 1360.8L1519.8 1348.7L1509.5 1340.1L1500.8 1338.3L1492.2 1345.2L1481.9 1340.1L1471.5 1331.4L1462.9 1326.3L1468.1 1317.6L1471.5 1307.3L1469.8 1295.2L1473.2 1283.1L1478.4 1272.8L1478.4 1262.4L1471.5 1255.5L1456 1253.1L1438.7 1251L1421.5 1252.1L1407.7 1253.8L1393.9 1259L1380.1 1264.2L1366.3 1271.1L1355.9 1279.7L1350.7 1291.8L1354.2 1302.1L1352.5 1319.4L1349 1336.6L1347.3 1353.9L1350.7 1371.1L1352.5 1388.4L1359.4 1402.2L1371.4 1409.1L1362.8 1414.3L1354.2 1421.2L1350.7 1433.2L1342.1 1441.9L1331.8 1450.5L1323.1 1460.8ZM1204.3 1297.4L1212.9 1295.3L1223.2 1297.4L1229.4 1306.3L1226 1316.7L1218.1 1322.6L1216.3 1329.5L1212.9 1332.9L1210.1 1324.3L1206.7 1313.9L1204.6 1305.3Z" fill="#bbc1fe" fill-rule="evenodd" stroke="#565a66" stroke-width="1.6" stroke-linejoin="round"/>
<path d="M1136.3 1221.5L1147.3 1218.4L1145.6 1227.7L1142.1 1238L1139.7 1232.9Z" fill="#bbc1fe" stroke="#6b6b72" stroke-width="1"/>
<path d="M1199.1 1298.4L1201.8 1307L1205.3 1320.8L1208.1 1331.9L1206 1320.8L1202.5 1308.8Z" fill="#bbc1fe" stroke="#6b6b72" stroke-width="1"/>
<path d="M1216.3 1419.2L1223.2 1412.3L1231.9 1413.3L1229.4 1422.6L1225 1429.5L1221.5 1439.9L1218.1 1449.2L1216.3 1439.9L1218.1 1429.5Z" fill="#bbc1fe" stroke="#6b6b72" stroke-width="1"/>
<path d="M1250.8 1436.4L1259.5 1434.7L1264.6 1448.5L1261.2 1462.3L1262.9 1475.4L1254.3 1466.5L1248.1 1458.9L1250.2 1446.8Z" fill="#bbc1fe" stroke="#6b6b72" stroke-width="1"/>
<path d="M1323.3 1475.4L1326.1 1477.8L1326.8 1483.7L1323.3 1483Z" fill="#bbc1fe" stroke="#6b6b72" stroke-width="1"/>
<path d="M1326.8 1491.6L1328.8 1495.1L1327.1 1496.8Z" fill="#bbc1fe" stroke="#6b6b72" stroke-width="1"/>
<path d="M1949.8 491.4L1954.3 492.5L1961.2 500.1L1960.1 505.2L1956 501.8Z" fill="#bbc1fe" stroke="#6b6b72" stroke-width="1"/>
<path d="M2005 670.9L2007.7 671.9L2007.7 674.3L2005.7 673.3Z" fill="#bbc1fe" stroke="#6b6b72" stroke-width="1"/>
<path d="M2035.3 676.7L2039.5 676.1L2040.2 679.5L2036 678.8Z" fill="#bbc1fe" stroke="#6b6b72" stroke-width="1"/>
<path d="M1908.4 928.4L1916.3 928.4L1921.5 932.9L1916.3 935.3L1910.4 932.9Z" fill="#bbc1fe" stroke="#6b6b72" stroke-width="1"/>
<path d="M1938 974.3L1943.9 969.8L1952.5 970.8L1950.8 975.3L1942.2 976.7Z" fill="#bbc1fe" stroke="#6b6b72" stroke-width="1"/>
<path d="M1876.2 556L1880 555.3L1881 558.1L1876.9 558.1Z" fill="#bbc1fe" stroke="#6b6b72" stroke-width="1"/>
<clipPath id="land"><path d="M1321.6 1462.3L1318.1 1458.9L1314.7 1446.8L1307.8 1438.2L1300.9 1429.5L1295.7 1420.9L1290.5 1412.3L1288.8 1405.4L1278.4 1403L1268.1 1405.4L1259.5 1408.8L1256 1414L1250.8 1408.8L1240.5 1407.1L1233.6 1401.9L1228.4 1393.3L1223.2 1396.8L1219.8 1386.4L1218.1 1376.1L1214.6 1365.7L1212.2 1353.6L1211.2 1341.5L1209.4 1331.2L1207.7 1320.8L1202.5 1310.5L1200.8 1300.1L1198.4 1288.1L1195.6 1276L1192.2 1265.6L1185.3 1255.3L1176.7 1250L1171.5 1240L1164.6 1229.6L1156 1221L1157.7 1212.4L1156 1198.6L1155 1181.3L1154.3 1164.1L1156 1146.8L1159.5 1133L1166.4 1120.9L1175 1110.6L1185.3 1102L1195.7 1091.6L1206.1 1084.7L1214.7 1077.8L1219.9 1067.5L1225 1057.1L1226.8 1043.3L1226.1 1026.1L1223.3 1008.8L1219.9 991.5L1214.7 974.3L1207.8 957L1199.2 938.1L1188.8 920.8L1178.4 905.3L1168.1 891.5L1154.3 877.7L1140.5 865.6L1126.7 855.2L1112.9 844.9L1099.1 834.5L1085.3 822.5L1071.5 810.4L1057.7 801.8L1043.9 797.6L1031.8 798.3L1024.9 805.2L1020.4 817.3L1019 808.7L1016.3 798.3L1014.5 784.5L1019.7 774.2L1023.2 763.8L1021.4 750L1019.8 745.1L1016.3 731.3L1007.7 719.3L997.3 708.9L983.5 696.8L966.3 688.2L949 679.6L931.8 672.7L918 666.5L909.3 660.6L911.1 645.1L914.5 627.8L919.7 610.6L923.1 599.5L930 597.4L936.9 603.7L945.6 607.1L955.9 605.4L969.7 596.8L983.5 586.4L997.3 572.6L1011.1 557.1L1021.5 545L1031.8 527.7L1042.2 507L1050.8 488.1L1057.7 469.1L1059.4 451.8L1061.2 434.6L1062.9 419L1066.3 409.7L1071.5 411.1L1080.1 420.8L1088.8 427.7L1097.4 425.9L1106 422.5L1114.6 428.4L1125 436.3L1135.3 443.2L1149.2 449.1L1163 453.6L1176.8 458.7L1190.6 462.2L1200.9 461.5L1214.7 455.3L1228.5 446.7L1238.9 432.9L1250.9 419L1259.6 403.5L1266.5 386.3L1271.6 372.5L1282 362.1L1292.4 351.8L1307.9 346.6L1320 339.7L1328.6 331.1L1338.9 332.8L1349.3 337.3L1363.1 338.6L1380 340.7L1380 340.7L1393.8 343.1L1407.6 351.1L1421.4 352.4L1428.3 367.3L1438.7 374.2L1454.2 389L1469.7 386.3L1481.8 394.9L1492.1 410.4L1502.5 425.9L1512.9 430.4L1524.9 439.8L1535.3 446.7L1545.6 450.1L1559.4 451.8L1573.2 450.8L1587 451.8L1595.7 451.8L1600.8 463.9L1609.5 469.1L1618.1 474.3L1628.4 481.2L1638.8 482.9L1649.2 479.4L1659.5 482.9L1673.3 481.2L1683.7 481.2L1697.5 493.2L1711.3 500.1L1725.1 505.3L1738.9 513.9L1752.7 519.1L1766.5 524.3L1776.8 532.9L1780 538L1797.3 544.9L1811.1 555.3L1824.9 569.1L1835.2 579.4L1843.8 595L1855.9 607L1869.7 615.7L1883.5 622.6L1900.8 624.3L1918 619.1L1931.8 615.7L1942.2 603.6L1947.4 595L1938.7 588.1L1924.9 577.7L1911.1 569.1L1897.3 562.2L1878.3 558L1890.4 550.1L1900.8 541.5L1914.6 538L1924.9 531.1L1931.8 524.2L1942.2 522.5L1952.5 527.7L1962.9 534.6L1975 538L1980.1 536.3L1990.5 541.5L2004.3 539.8L2018.1 537.3L2026.7 538L2027.8 551.8L2026.7 562.2L2033.6 563.9L2025 570.8L2019.8 579.4L2023.3 588.1L2031.9 593.2L2042.2 598.4L2052.6 600.1L2057.8 607L2059.5 613.9L2052.6 617.4L2045.7 624.3L2037.1 631.2L2021.5 636.4L2007.7 638.1L1995.7 639.8L1988.8 634.6L1976.7 636.4L1968.1 634.6L1966.3 645L1968.1 655.3L1959.4 660.5L1956.7 669.2L1962.9 676.1L1961.2 683L1969.8 688.1L1983.6 684.7L1993.9 686.4L2004.3 689.9L2014.6 688.1L2025 686.4L2031.9 693.3L2038.8 700.2L2045.7 707.1L2052.6 714L2057.8 720.9L2057.8 731.3L2054.3 739.9L2045.7 745.1L2033.6 745.1L2026.7 750.2L2025 758.9L2031.9 765.8L2042.2 770.9L2052.6 777.8L2056.1 783L2050.9 793.4L2045.7 802L2044 810.6L2049.2 819.3L2047.4 829.6L2045.7 840L2050.9 848.6L2059.5 855.5L2068.1 860.7L2063 869.3L2061.2 883.1L2056.1 893.4L2052.6 900L2052.6 900.1L2056.1 907L2066.4 912.1L2076.8 915.6L2087.1 920.8L2097.5 927.7L2111.3 931.1L2125.1 932.9L2130.2 941.5L2137.1 950.1L2145.8 951.8L2150.9 957L2163 958L2176.8 959.4L2188.9 953.6L2199.3 953.6L2207.9 957L2207.9 969.1L2202.7 979.4L2194.1 988.1L2187.2 995L2173.4 995L2159.6 991.5L2145.8 991.5L2135.4 996.7L2125.1 1000.1L2116.4 996.7L2106.1 996.7L2100.9 1005.3L2092.3 1010.5L2083.7 1013.9L2083 1020.8L2090.6 1022.6L2099.2 1020.8L2102.6 1027.7L2095.7 1031.2L2104.4 1034.6L2107.8 1038.1L2097.5 1039.8L2083.7 1038.1L2069.9 1039.8L2061.2 1043.3L2056.1 1051.9L2061.2 1057.1L2068.1 1060.5L2068.1 1069.2L2064.7 1074.3L2056.1 1076.1L2052.6 1077.8L2045.7 1072.6L2037.1 1067.4L2033.6 1062.2L2040.5 1057.1L2038.8 1051.2L2033.6 1053.6L2028.4 1058.8L2021.5 1055.3L2018.1 1048.4L2021.5 1041.5L2016.4 1036.4L2006 1034.6L1995.7 1031.9L1991.2 1024.3L1992.2 1013.9L1993.9 1007L2004.3 1003.6L2014.6 998.4L2019.8 989.8L2026.7 988.1L2033.6 988.1L2028.4 981.2L2026.7 972.5L2021.5 965.6L2011.2 962.2L2000.8 962.2L1990.5 958.7L1983.6 951.8L1981.9 944.9L1975 946.7L1966.3 950.1L1961.2 955.3L1956 948.4L1952.5 938L1949.1 927.7L1943.9 919L1935.3 915.6L1924.9 913.9L1921.5 908.7L1912.9 903.5L1902.5 901.8L1900.8 907L1890.4 907.7L1881.8 910.4L1876.6 919L1881.8 924.9L1873.2 919L1866.3 910.4L1857.6 903.5L1854.2 896.6L1847.3 888L1843.8 877.6L1838.7 869L1828.3 864.9L1816.2 867.3L1805.9 874.2L1801.4 882.8L1803.5 894.9L1809.3 907L1808.3 920.8L1807.6 932.9L1814.5 944.9L1818 958.7L1824.9 972.5L1828.3 986.3L1821.4 995L1823.1 1003.6L1831.8 1008.8L1838.7 1017.4L1845.6 1029.5L1850.7 1041.5L1857.6 1055.3L1864.5 1067.4L1871.4 1081.2L1876.6 1093.3L1883.5 1105.4L1890.4 1114L1895.6 1126.1L1902.5 1139.9L1900.8 1152L1897.3 1162.3L1895.6 1176.1L1897.3 1189.9L1905.9 1198.6L1914.6 1196.8L1923.2 1193.4L1930.1 1196.8L1931.8 1208.9L1938.7 1217.5L1943.9 1227.9L1938.7 1231.3L1945.6 1241.7L1952.5 1255.5L1956 1269.3L1956 1283.1L1950.8 1293.4L1950.8 1300L1950.9 1300L1956.1 1300.4L1961.2 1312.5L1964.7 1326.3L1969.9 1340.1L1973.3 1353.9L1976.8 1367.7L1978.5 1378L1985.4 1386.7L1992.3 1397L1999.2 1409.1L2002.6 1419.4L2004.4 1428.1L2011.3 1436.7L2004.4 1443.6L1999.2 1450.5L2000.9 1460.8L1992.3 1464.3L1983.7 1459.1L1973.3 1464.3L1966.4 1471.2L1964.7 1481.5L1969.9 1491.9L1975 1497.1L1971.6 1505.7L1966.4 1516.1L1966.4 1529.9L1969.9 1540.2L1976.8 1550.6L1985.4 1562.6L1995.7 1573L2007.8 1581.6L2021.6 1588.5L2028.5 1598.9L2032 1605.8L2026.8 1616.1L2025.1 1626.5L2030.2 1633.4L2038.9 1640.3L2045.8 1648.9L2056.1 1655.8L2061.3 1662.7L2059.6 1671.3L2045.8 1671.3L2032 1669.6L2023.3 1676.5L2013 1671.3L2002.6 1667.9L1995.7 1661L1988.8 1648.9L1985.4 1636.8L1983.7 1626.5L1976.8 1616.1L1968.1 1609.9L1956.1 1607.5L1945.7 1610.9L1938.8 1617.8L1940.5 1629.9L1942.2 1643.7L1942.2 1655.8L1937.1 1648.9L1928.4 1643.7L1919.8 1645.5L1912.9 1650.6L1907.7 1645.5L1907.7 1636.8L1914.6 1629.9L1921.5 1623L1933.6 1617.8L1930.2 1610.9L1926.7 1598.9L1919.8 1588.5L1918.1 1578.2L1909.5 1566.1L1900.8 1555.7L1890.5 1547.1L1883.6 1536.8L1883.6 1523L1878.4 1512.6L1869.8 1502.2L1861.2 1495.3L1854.3 1495.3L1852.5 1509.2L1849.1 1516.1L1843.9 1505.7L1842.2 1495.3L1847.4 1485L1849.1 1471.2L1845.6 1460.8L1840.5 1450.5L1837 1440.1L1835.3 1428.1L1831.8 1417.7L1818 1412.5L1800.8 1411.8L1783.5 1412.5L1766.3 1411.5L1749 1410.8L1736.9 1412.5L1728.3 1419.4L1716.2 1426.3L1709.3 1433.2L1707.6 1443.6L1712.8 1453.9L1711.1 1462.6L1697.3 1466L1686.9 1472.9L1681.7 1485L1683.5 1497.1L1692.1 1504L1697.3 1516.1L1692.4 1519.5L1688.9 1512.6L1680.3 1507.4L1671.6 1510.9L1671.6 1519.5L1678.6 1528.1L1683.7 1536.8L1676.8 1545.4L1669.9 1548.8L1664.7 1541.9L1657.8 1541.9L1655.4 1554L1656.1 1567.8L1657.8 1581.6L1655.4 1595.4L1654.4 1605.8L1659.6 1616.1L1663 1626.5L1666.5 1640.3L1664.7 1654.1L1664.7 1667.9L1661.3 1678.2L1664.7 1688.6L1659.6 1693.8L1656.8 1702.4L1654.4 1692L1650.9 1681.7L1649.2 1671.3L1644 1661L1638.9 1654.1L1628.5 1648.9L1619.9 1643.7L1611.3 1636.8L1606.1 1642L1595.7 1636.8L1588.8 1626.5L1583.7 1616.1L1581.9 1605.8L1587.1 1600.6L1595.7 1595.4L1604.4 1592L1602.6 1581.6L1599.2 1571.3L1604.4 1564.4L1600.9 1554L1594 1547.1L1595.7 1536.8L1592.3 1526.4L1600.9 1521.2L1594 1512.6L1590.6 1502.2L1597.5 1495.3L1606.1 1486.7L1597.5 1486.7L1587.1 1488.4L1583.7 1478.1L1576.8 1464.3L1573.3 1450.5L1566.4 1436.7L1559.5 1426.3L1556.1 1412.5L1550.9 1398.7L1542.2 1388.4L1535.3 1376.3L1528.4 1360.8L1519.8 1348.7L1509.5 1340.1L1500.8 1338.3L1492.2 1345.2L1481.9 1340.1L1471.5 1331.4L1462.9 1326.3L1468.1 1317.6L1471.5 1307.3L1469.8 1295.2L1473.2 1283.1L1478.4 1272.8L1478.4 1262.4L1471.5 1255.5L1456 1253.1L1438.7 1251L1421.5 1252.1L1407.7 1253.8L1393.9 1259L1380.1 1264.2L1366.3 1271.1L1355.9 1279.7L1350.7 1291.8L1354.2 1302.1L1352.5 1319.4L1349 1336.6L1347.3 1353.9L1350.7 1371.1L1352.5 1388.4L1359.4 1402.2L1371.4 1409.1L1362.8 1414.3L1354.2 1421.2L1350.7 1433.2L1342.1 1441.9L1331.8 1450.5L1323.1 1460.8ZM1204.3 1297.4L1212.9 1295.3L1223.2 1297.4L1229.4 1306.3L1226 1316.7L1218.1 1322.6L1216.3 1329.5L1212.9 1332.9L1210.1 1324.3L1206.7 1313.9L1204.6 1305.3Z" clip-rule="evenodd"/></clipPath>
<g fill="none" stroke="#5c6272" stroke-width="1.6" stroke-linejoin="round" clip-path="url(#land)">
<path d="M1128.3 439.6L1117.4 452L1103.4 457.3L1091 466L1087.9 483L1092.5 497L1103.4 504.8L1114.3 515.7L1128.3 524.3L1143.8 528.7"/>
<path d="M1140.7 452L1133.5 463.5L1140.7 471.6L1148.4 476.8L1145.3 492.4L1150 507.9L1148.4 521.2L1143.8 528.7L1151.6 537.4L1157.8 544.2"/>
<path d="M1157.8 544.2L1169.6 542L1167.1 523.4L1175.8 519.4L1174.8 506.3L1171.7 497.6L1174.8 484.6L1177.3 478.4L1193.5 476.8L1196.6 470.6L1193.5 464.4"/>
<path d="M1193.5 476.8L1202.8 479L1210.6 476.8L1219.9 479.6L1229.8 480.9L1236 476.8L1241.6 471.6L1241.6 461.3"/>
<path d="M1241.6 461.3L1241 453.5L1237 447.3L1235.4 439.6"/>
<path d="M1241.6 461.3L1247.8 456.6L1250.3 444.2L1254 434.9L1255.6 424L1266.5 424L1280.4 422.5L1293.8 425.6L1300.6 433.4L1309.9 447.3L1316.1 461.3L1328.6 466L1334.8 473.7L1341 481.5L1350 490.2"/>
<path d="M1247.8 461.3L1254 467.5L1260.2 469.1L1261.8 463.5L1271.1 462.2L1286.6 463.5L1289.8 470.6L1299.1 475.3L1309.9 474.7L1319.3 479.9L1328.6 484.6L1336.3 487.7L1350 490.2"/>
<path d="M1229.8 480.9L1228.6 489.3L1233.9 500.1L1238.5 509.4L1244.7 521.9L1249.4 531.2L1240.1 535.8L1224.5 537.4L1216.8 545.2L1212.1 556L1202.8 558.5L1199.7 574.7L1193.5 587.1L1187.3 596.4L1184.2 608.8L1178 616.6L1171.7 621.9"/>
<path d="M1157.8 544.2L1148.4 568.4L1151.6 587.1L1153.1 605.7L1153.1 622.8"/>
<path d="M1153.1 622.8L1145.3 620.6L1136 619.7L1128.3 618.1L1128.3 611.9L1122 604.2L1114.3 598L1105 585.5L1097.2 577.8L1105 568.4L1108.1 562.2L1100.3 554.5L1103.4 546.7L1089.4 537.4L1077 525L1070.8 515.7L1058.4 507.9L1052.2 497L1049.1 490.2"/>
<path d="M1153.1 622.8L1164 624.3L1171.7 621.9"/>
<path d="M1171.7 621.9L1179.5 632.1L1190.4 636.8L1202.8 639.9L1209 649.2L1212.1 661.6L1219.9 672.5L1226.1 680.2L1230.7 677.1L1235.4 663.2L1244.7 649.2L1263.4 634.3L1280.4 619.7L1288.2 610.4L1285.1 605.1L1272.7 601.1L1257.1 604.2L1248.4 595.8L1241.6 593.3L1231.7 589.6L1237 577.8L1232.9 564.7L1240.1 568.4L1241.6 573.1L1254 583.4L1261.8 585.5L1268 593.9L1288.2 593.3L1296 599.5L1302.2 598.9"/>
<path d="M1249.4 531.2L1250.3 537.4L1260.2 543.6L1268 548.3L1274.2 556L1288.2 559.1L1300.6 565.3L1309.9 573.1L1322.4 577.8L1334.8 568.4L1350 559.1"/>
<path d="M1322.4 577.8L1316.1 587.1L1302.2 598.9L1306.8 608.8L1311.5 618.1L1309.9 625.9L1302.2 630.6L1297.5 643L1289.8 655.4L1282 664.7L1271.1 674L1264.9 681.8L1269.6 695.8"/>
<path d="M1322.4 577.8L1330.1 585.5L1337.9 596.4L1350 602.6"/>
<path d="M1309.9 625.9L1319.3 629L1331.7 639.9L1341 652.3L1344.1 661.6L1350 670.9"/>
<path d="M1269.6 695.8L1257.1 705.1L1247.8 708.2L1240.1 708.2L1237 700.4L1229.2 697.3L1223 703.5L1216.8 702L1213.7 692.7L1215.2 683.4L1226.1 680.2"/>
<path d="M1269.6 695.8L1285.1 694.2L1292.9 698.9L1297.5 698.9L1303.7 689.6L1313 680.2L1322.4 672.5L1334.8 666.3L1344.1 661.6"/>
<path d="M1297.5 698.9L1291.3 708.2L1288.2 720.6L1290.7 736.1L1292.9 751.7L1294.4 770"/>
<path d="M1290.7 736.1L1303.7 739.3L1313 745.5L1322.4 754.8L1331.7 767.2"/>
<path d="M1216.8 702L1204.3 703.5L1191.9 702.6L1181.1 706.6L1171.7 705.1L1160.9 697.3L1156.2 688L1151.6 681.8L1146.9 691.1L1136 691.1L1129.8 688"/>
<path d="M1129.8 688L1123.6 670.9L1114.3 658.5L1111.2 646.1L1106.5 633.7L1105 625.9L1117.4 629.9L1129.8 630.6L1142.2 629L1153.1 622.8"/>
<path d="M1129.8 688L1123.6 697.3L1123 709.8L1114.3 714.4L1106.5 719.1"/>
<path d="M1106.5 719.1L1098.8 706.6L1087.9 711.9L1072.4 717.5L1070.8 725.3L1058.4 729.9L1046 734.6L1048.4 742.4L1046 748.6L1033.5 750.1L1024.2 751.7"/>
<path d="M1106.5 719.1L1103.4 733L1103.4 747L1092.5 754.8L1086.3 764.1L1073.9 767.2L1067.7 770"/>
<path d="M1046 748.6L1049.1 757.9L1055.3 765.7L1058.4 770"/>
<path d="M1123 709.8L1118.9 723.7L1120.5 736.1L1125.2 742.4L1122 754.8L1123.6 770"/>
<path d="M1223 703.5L1229.2 711.3L1235.4 719.1L1232.3 725.3L1216.8 729.9L1205.9 734.6L1199.7 742.4L1191.9 747L1179.5 745.5L1173.3 753.2L1176.4 761L1170.2 770"/>
<path d="M1191.9 747L1198.1 751.7L1210.6 754.8L1219.9 757.9L1221.4 770"/>
<path d="M1013.4 554.5L1019.6 562.2L1025.8 571.6L1028.9 582.4L1036.6 590.2L1047.5 596.4L1052.2 598"/>
<path d="M1052.2 598L1051.6 587.1L1059.9 585.5L1061.5 577.8L1067.7 580.9L1073.9 591.7L1081.7 596.4L1092.5 594.8L1098.8 602.6L1106.5 608.8L1108.1 618.1L1106.5 625.9"/>
<path d="M954.3 613.5L957.5 615L970.8 618.1L972 630.6L977.6 633.7"/>
<path d="M970.8 618.1L988.5 615L993.2 607.3L1007.1 602L1018 598L1030.4 600.1L1046 605.1L1055.3 610.4"/>
<path d="M1052.2 598L1049.1 602.6L1046 605.1"/>
<path d="M1055.3 610.4L1046 611.3L1033.5 611.9L1028.9 619.7L1018 627.5L1014.3 633.7L1016.5 643L1011.8 646.1L1019.6 650.7L1024.2 657L1033.5 654.8L1036.6 646.1L1042.9 638.3L1052.2 635.2L1059.9 630.6L1070.8 627.5L1078.6 625L1087.9 627.5L1095.7 625.9L1105 625.9"/>
<path d="M1055.3 610.4L1069.3 607.3L1078.6 611.9L1086.3 618.1L1087.9 627.5"/>
<path d="M910.9 658.5L924.8 649.2L940.4 644.5L948.1 636.8L955.9 629L966.8 630.6L977.6 633.7"/>
<path d="M977.6 633.7L976.1 643L973.9 658.5L973 667.8L977.6 680.2L981.4 689.6L981.4 694.2"/>
<path d="M977.6 633.7L990.1 630.6L1002.5 633.7L1007.1 635.2L1011.8 646.1"/>
<path d="M1033.5 654.8L1036.6 660.1L1042.9 663.2L1036.6 673.4L1030.4 664.7L1024.2 663.2L1016.5 667.8L1004 672.5L1000 681.8L1002.5 692.7L994.7 700.4"/>
<path d="M1285.1 361.9L1300.6 379L1313 386.8L1317.7 397.6L1333.2 407L1341 411.6L1350 405.4"/>
<path d="M1341 411.6L1336.3 427.1L1341 439.6L1350 450.4"/>
<path d="M1371.7 341.1L1368.6 354.2L1373.3 363.5L1378 375.3L1364 380.6L1359.3 391.4L1350 403.9"/>
<path d="M1423.9 354.2L1419.9 361.9L1413.7 371.2L1418.3 379L1410.6 386.8L1396.6 388.3L1387.3 382.1L1379.5 391.4L1371.7 400.7L1368.6 416.3L1367.1 434.9L1360.9 448.9"/>
<path d="M1350 452L1360.9 448.9L1371.7 450.4L1387.3 453.5L1399.7 458.2L1416.8 464.4L1410.6 472.2L1416.8 479.9"/>
<path d="M1387.3 453.5L1390.4 442.7L1396.6 433.4L1407.5 419.4L1418.3 410.1L1429.2 403.9L1440.1 397.6L1441.6 388.3L1454 386.8"/>
<path d="M1416.8 479.9L1429.2 481.5L1443.2 478.4L1455.6 473.7L1469.6 467.5L1480.4 461.3L1488.2 450.4L1491.3 439.6L1480.4 436.5L1469.6 433.4L1466.5 427.1L1469.6 419.4L1468 413.2L1483.5 416.3L1494.4 418.8"/>
<path d="M1416.8 479.9L1396.6 481.5L1381.1 478.4L1379.5 493.9L1376.4 504.8L1362.4 506.3L1354.7 514.1L1350 515.7"/>
<path d="M1480.4 461.3L1483.5 472.2L1499.1 476.8L1508.4 487.7L1514.6 500.1L1509.9 509.4"/>
<path d="M1509.9 509.4L1523.9 501.7L1542.5 493.9L1551.9 487.7L1555 475.3L1550.3 466L1545.7 456.6L1545.7 448.9"/>
<path d="M1509.9 509.4L1511.5 523.4L1527 526.5L1527 538.9L1522.4 543.6L1523.9 559.1L1513 562.2L1509.9 573.1L1517.7 577.8"/>
<path d="M1517.7 577.8L1511.5 587.1L1499.1 588.6L1486.6 594.8L1475.8 601.1L1472.7 611.9L1466.5 622.8L1458.7 625.9L1446.3 622.8L1444.7 618.1L1441.6 625.9L1432.3 629L1423 627.5"/>
<path d="M1423 627.5L1409 621.2L1407.5 608.8L1398.1 601.1L1384.2 601.1L1376.4 591.7L1368.6 584.6L1359.3 590.2L1350 598"/>
<path d="M1423 627.5L1415.2 639.9L1419.9 649.2L1418.3 657"/>
<path d="M1517.7 577.8L1525.5 590.2L1539.4 601.1L1551.9 604.2L1564.3 599.5L1573.6 591.7L1575.2 579.3L1572 571.6L1579.2 559.1L1567.4 556L1562.7 543.6L1556.5 534.3L1564.3 525L1568.9 514.1L1578.3 506.3L1573.6 498.6L1582.9 489.3L1595.3 476.8L1603.1 469.1"/>
<path d="M1575.2 579.3L1582.9 582.4L1592.2 573.1L1601.6 565.3L1620.2 564.7"/>
<path d="M1617.1 475.3L1617.1 493.9L1615.5 512.5L1614 537.4L1607.8 549.8L1607.8 564.7"/>
<path d="M1620.2 564.7L1624.8 556L1623.3 543.6L1635.7 538.9L1645 531.2L1651.2 523.4L1652.8 529.6L1663.7 531.2L1677.6 532.7L1677.6 525L1663.7 523.4L1663.7 515.7L1676.1 509.4L1687 500.1L1699.4 495.5"/>
<path d="M1620.2 564.7L1620.2 574.7L1626.4 587.1L1621.7 599.5L1624.8 618.1L1640.4 624.3L1638.8 633.7L1646.6 638.3"/>
<path d="M1646.6 638.3L1655.9 625.9L1673 618.1L1691.6 608.8L1704 599.5L1707.1 591.7L1718 580.9L1728.9 573.1L1741.3 571.6L1753.7 562.2L1761.5 551.4L1773.9 545.2L1767.7 559.1L1775.5 556L1791 557.6L1795.7 551.4"/>
<path d="M1704 599.5L1722.7 610.4L1735.1 618.1L1722.7 625.9L1719.6 636.8L1724.2 646.1"/>
<path d="M1646.6 638.3L1634.2 643L1620.2 644.5L1607.8 653.9L1604.7 664.7L1606.2 678.7L1603.1 691.1L1607.8 709.8"/>
<path d="M1539.4 601.1L1542.5 618.1L1542.5 630.6L1536.3 643L1530.1 650.7L1536.3 661.6L1544.1 674L1550.3 684.9"/>
<path d="M1550.3 684.9L1536.3 684.9L1525.5 689.6L1513 694.2L1506.8 705.1L1503.7 712.9"/>
<path d="M1550.3 684.9L1564.3 686.5L1573.6 692.7L1581.4 703.5L1589.1 712.9L1598.4 714.4L1607.8 709.8"/>
<path d="M1607.8 709.8L1623.3 711.3L1638.8 708.2L1648.1 700.4L1660.6 689.6L1673 680.2L1679.2 672.5L1687 683.4L1694.7 689.6L1707.1 686.5L1716.5 680.2L1719.6 667.8L1722.7 657L1724.2 646.1"/>
<path d="M1724.2 646.1L1741.3 644.5L1753.7 647.6L1766.1 649.2"/>
<path d="M1766.1 649.2L1770.8 636.8L1778.6 624.3L1783.2 611.9L1787.9 601.1L1792.5 605.7L1800 599.5"/>
<path d="M1766.1 649.2L1767.7 658.5L1778.6 663.2L1787.9 663.2L1800 657"/>
<path d="M1787.9 663.2L1791 674L1786.3 683.4L1800 680.2"/>
<path d="M1716.5 680.2L1714.9 691.1L1705.6 700.4L1700.9 714.4L1700.9 726.8L1711.8 723.7L1721.1 720.6L1735.1 723.7L1746 731.5"/>
<path d="M1746 731.5L1759.9 729.9L1772.4 736.1L1781.7 742.4L1800 733"/>
<path d="M1746 731.5L1742.9 742.4L1746 754.8L1749.1 770"/>
<path d="M1700.9 726.8L1691.6 733L1682.3 736.1L1677.6 747L1677.6 761L1674.5 770"/>
<path d="M1623.3 711.3L1626.4 722.2L1632.6 733L1628 745.5L1631.1 757.9L1628 770"/>
<path d="M1418.3 657L1405.9 661.6L1390.4 666.3L1376.4 675.6L1364 680.2L1350 686.5"/>
<path d="M1418.3 657L1430.7 658.5L1443.2 660.1L1450.9 664.7L1454 677.1L1452.5 692.7L1449.4 703.5L1441.6 712.9L1433.9 722.2L1424.5 719.1L1410.6 714.4L1396.6 711.3L1393.5 719.1"/>
<path d="M1449.4 703.5L1460.2 695.8L1469.6 694.2L1477.3 697.3L1477.3 703.5L1486.6 711.3L1496 709.8L1503.7 712.9"/>
<path d="M1503.7 712.9L1511.5 720.6L1514.6 734.6L1522.4 740.8L1522.4 754.8L1520.8 770"/>
<path d="M1514.6 734.6L1506.8 742.4L1499.1 750.1L1477.3 750.1L1477.3 770"/>
<path d="M1350 686.5L1359.3 692.7L1368.6 697.3L1381.1 702L1393.5 711.3L1393.5 719.1L1402.8 729.9L1409 736.1L1413.7 747L1424.5 750.1L1427.6 761L1435.4 770"/>
<path d="M1350 729.9L1362.4 725.3L1374.8 726.8L1384.2 736.1L1396.6 734.6L1409 736.1"/>
<path d="M1413.7 747L1410.6 754.8L1415.2 764.1L1412.1 770"/>
<path d="M1834.2 577.8L1826.4 585.5L1815.5 593.3L1800 604.2"/>
<path d="M1846.6 601.1L1834.2 613.5L1821.7 627.5L1812.4 636.8L1814 644.5L1806.2 652.3L1800 655.4"/>
<path d="M1859 610.4L1857.5 621.2L1854.3 630.6L1857.5 639.9L1852.8 652.3L1855.9 661.6L1853.4 672.5"/>
<path d="M1888.5 625.9L1887 630.6L1879.2 636.8L1868.3 639.9L1866.8 649.2L1863.7 658.5L1865.2 669.4"/>
<path d="M1800 683.4L1812.4 681.8L1814 675.6L1828 672.5L1838.8 677.1L1843.5 672.5L1853.4 672.5L1865.2 669.4L1877.6 667.8L1883.9 672.5L1882.3 675.6L1894.7 681.8"/>
<path d="M1894.7 681.8L1911.8 674L1930.4 670.9L1946 669.4L1959.9 668.4"/>
<path d="M1938.2 611.9L1949.1 624.3L1961.5 635.2L1967.7 639.9"/>
<path d="M1941.3 622.8L1939.8 627.5L1944.4 632.1L1942.9 639.9L1947.5 649.2L1955.3 650.7L1959.9 657"/>
<path d="M1980.1 633.7L1978.6 618.1L1981.7 605.7L1986.3 594.8L1991 587.1L1989.4 574.7L1995.7 566.9L2005 559.1L2017.4 559.1L2028.3 559.8"/>
<path d="M1894.7 681.8L1899.4 692.7L1902.5 708.2L1905.6 723.7L1908.7 736.1L1907.1 747L1910.2 753.2"/>
<path d="M1838.8 677.1L1835.7 683.4L1841.9 691.1L1834.2 697.3L1832.6 708.2L1820.2 712.9L1812.4 723.7L1815.5 734.6L1818.6 748.6L1828 756.3L1843.5 762.5L1862.1 761L1877.6 757.9L1893.2 753.2L1910.2 753.2"/>
<path d="M1910.2 753.2L1924.2 757.9L1933.5 759.4L1946 754.8L1955.3 750.1L1958.4 739.3L1953.7 729.9L1955.3 719.1L1963 711.3L1973.9 708.2L1989.4 706.6L2001.9 705.1L2003.4 689.6"/>
<path d="M1933.5 759.4L1928.9 770"/>
<path d="M1800 729.9L1806.2 736.1L1815.5 734.6"/>
<path d="M1122 770L1128.3 776.2L1139.1 779.3L1146.9 776.2L1145.3 788.6L1148.4 799.5L1151.6 808.8L1139.1 810.4L1128.3 813.5L1122 808.8L1117.4 813.5L1111.2 815L1106.5 818.1L1100.3 819.7L1098.8 829L1095.7 833.7"/>
<path d="M1146.9 776.2L1157.8 774.7L1167.1 773.1L1173.3 770"/>
<path d="M1151.6 808.8L1164 811.9L1170.2 808.8L1171.7 813.5L1167.1 819.7"/>
<path d="M1167.1 819.7L1179.5 821.2L1195 822.8L1210.6 819.7L1223 815L1237 813.5L1246.3 819.7L1247.8 827.5L1257.1 833.7L1266.5 839.9L1277.3 844.5L1283.5 850.7L1288.2 857"/>
<path d="M1167.1 819.7L1164 829L1154.7 836.8L1157.8 847.6L1156.2 858.5L1164 869.4L1168.6 877.1L1165.5 883.4L1148.4 868.8"/>
<path d="M1170.2 897.3L1178 891.1L1184.2 891.1L1191.9 897.3L1201.2 889.6L1210.6 878.7L1216.8 873.1L1223 878.7L1235.4 883.4L1250.9 886.5L1266.5 888L1278.9 889.6"/>
<path d="M1288.2 857L1285.1 869.4L1277.3 877.1L1278.9 889.6L1271.1 894.2L1268.9 905.1L1277.3 912.9L1282 922.2L1278.9 933"/>
<path d="M1288.2 857L1300.6 850.7L1313 846.1L1319.3 846.1"/>
<path d="M1213.7 770L1216.8 779.3L1224.5 787.1L1235.4 784L1244.7 788.6L1254 782.4L1257.1 791.7L1258.7 802.6L1268 799.5L1272.7 791.7L1282 787.1L1296 788.6"/>
<path d="M1296 770L1297.5 785.5L1296 794.8L1291.3 807.3L1288.2 822.8L1286.6 841.4L1288.2 857"/>
<path d="M1319.3 846.1L1320.8 860.1L1322.4 870.9L1330.1 869.4L1333.2 875.6L1331.7 888L1336.3 894.2L1330.1 900.4L1322.4 903.5L1320.8 916L1319.3 928.4L1316.1 940.8"/>
<path d="M1319.3 846.1L1330.1 844.5L1337.9 847.6L1344.1 860.1L1350 869.4"/>
<path d="M1350 801.1L1334.8 804.2L1322.4 805.7L1313 808.8L1309.9 819.7L1303.7 827.5L1302.2 839.9L1303.7 849.2"/>
<path d="M1278.9 933L1263.4 937.7L1258.7 950.1L1254 959.4L1241.6 968.8L1243.2 973.4L1249.4 975L1252.5 988.9"/>
<path d="M1278.9 933L1291.3 934.6L1306.8 936.1L1316.1 940.8L1314.6 956.3L1319.3 968.8L1317.7 984.3L1323.9 988.9"/>
<path d="M1221.4 999.8L1229.2 992L1240.1 988.9L1252.5 988.9L1269.6 988.9L1285.1 988.9L1297.5 992L1309.9 990.5L1323.9 988.9L1337.9 985.8"/>
<path d="M1337.9 985.8L1339.4 971.9L1336.3 956.3L1342.5 948.6L1350 945.5"/>
<path d="M1337.9 985.8L1339.4 999.8L1341 1015.3L1350 1024.7"/>
<path d="M1313 992L1314.6 1004.5L1300.6 1015.3L1299.1 1024.7L1306.8 1034L1309.9 1046.4L1305.3 1058.8L1303.7 1068.1L1317.7 1072.8L1316.1 1086.8L1314.6 1096.1L1303.7 1103.9L1299.1 1117.8"/>
<path d="M1300.6 1015.3L1289.8 1016.9L1282 1023.1L1280.4 1034L1275.8 1043.3L1266.5 1049.5L1261.8 1055.7L1260.2 1068.1"/>
<path d="M1224.5 1060.4L1237 1061.9L1244.7 1066.6L1254 1069.7L1260.2 1068.1L1269.6 1075.9L1269.6 1082.1L1266.5 1089.9L1264.9 1100.7L1264 1110.1"/>
<path d="M1264 1110.1L1278.9 1111.6L1291.3 1116.3L1299.1 1117.8"/>
<path d="M1264 1110.1L1250.9 1105.4L1237 1107L1229.2 1111.6L1226.1 1124L1223 1136.5L1218.3 1142.7L1212.1 1139.6L1202.8 1133.4L1195 1131.8L1188.8 1134.9L1182.6 1127.1L1174.8 1117.8L1170.2 1114.7"/>
<path d="M1226.1 1124L1233.9 1128.7L1241.6 1139.6L1246.3 1152L1250.9 1163.8"/>
<path d="M1250.9 1163.8L1238.5 1167.5L1233.9 1172.2L1226.1 1179.9L1215.2 1184.6L1207.5 1186.1L1198.1 1183L1185.7 1179.9L1173.3 1178.4L1170.2 1187.7L1173.3 1193.9L1167.1 1197L1157.8 1198.6"/>
<path d="M1250.9 1163.8L1257.1 1156.6L1269.6 1152L1280.4 1152L1289.8 1150.4L1292.9 1141.1L1302.2 1138L1300.6 1127.1L1299.1 1117.8"/>
<path d="M1299.1 1117.8L1309.9 1111.6L1325.5 1110.1L1337.9 1111.6L1350 1113.2"/>
<path d="M1350 1080.6L1341 1089.9L1330.1 1093L1330.1 1105.4L1333.2 1111"/>
<path d="M1302.2 1138L1309.9 1138L1316.1 1145.8L1327 1150.4L1334.8 1144.2L1339.4 1147.3L1340.4 1161.3L1350 1164.4"/>
<path d="M1289.8 1150.4L1292.9 1161.3L1302.2 1170.6L1309.9 1183L1316.1 1192.4L1327 1200.1L1334.8 1198.6L1350 1186.1"/>
<path d="M1334.8 1150.4L1322.4 1153.5L1319.3 1166L1327 1170.6L1334.8 1176.8L1344.1 1173.7L1350 1176.8"/>
<path d="M1257.1 1162.9L1261.8 1173.7L1268 1183L1272.7 1193.9L1266.5 1204.8L1261.8 1220"/>
<path d="M1233.9 1172.2L1237 1183L1241.6 1193.9L1244.7 1204.8L1244.7 1220"/>
<path d="M1272.7 1193.9L1282 1200.1L1291.3 1207.9L1296 1220"/>
<path d="M1327 1200.1L1337.9 1204.8L1344.1 1214.1L1350 1217.2"/>
<path d="M1285.1 1220L1285.1 1209.4L1294.4 1209.4"/>
<path d="M1350 799.5L1362.4 802.6L1373.3 799.5L1368.6 791.7L1362.4 788.6L1378 782.4L1390.4 770"/>
<path d="M1373.3 799.5L1385.7 793.3L1395 790.2L1399.7 801.1L1409 808.8L1416.8 819.7"/>
<path d="M1416.8 819.7L1433.9 818.1L1449.4 816.6L1455.6 818.1"/>
<path d="M1455.6 818.1L1458.7 807.3L1457.1 796.4L1464.9 787.1L1475.8 784L1477.3 770"/>
<path d="M1440.1 770L1443.2 782.4L1444.7 793.3L1457.1 796.4"/>
<path d="M1416.8 819.7L1410.6 829L1405.9 841.4L1396.6 847.6L1384.2 857L1374.8 863.2L1365.5 869.4L1357.8 878.7L1350 875.6"/>
<path d="M1455.6 818.1L1466.5 830.6L1474.2 841.4L1471.1 852.3L1485.1 857"/>
<path d="M1485.1 857L1499.1 855.4L1505.3 852.3L1506.8 839.9L1508.4 829L1514.6 824.3L1514.6 815L1523.9 811.9L1530.1 810.4"/>
<path d="M1530.1 810.4L1531.7 801.1L1523.9 791.7L1522.4 784L1517.7 776.2L1517.7 770"/>
<path d="M1530.1 810.4L1541 816.6L1545.7 824.3L1541 830.6L1545.7 836.8L1561.2 839.9L1572 844.5"/>
<path d="M1572 844.5L1576.7 832.1L1581.4 825.9L1579.8 816.6L1582.9 805.7L1595.3 801.1L1604.7 794.8L1607.8 785.5L1617.1 779.3L1624.8 774.7L1624.8 770"/>
<path d="M1624.8 774.7L1628 787.1L1631.1 799.5L1641.9 794.8L1649.7 788.6L1654.3 782.4L1660.6 774.7L1665.2 770"/>
<path d="M1654.3 782.4L1662.1 793.3L1666.8 804.2L1668.3 818.1L1671.4 830.6L1676.1 839.9L1687 843L1685.4 850.7L1680.7 853.9"/>
<path d="M1680.7 853.9L1694.7 855.4L1713.4 860.1L1732 863.2L1750.6 857L1766.1 852.3L1773.9 844.5L1777 830.6L1775.5 822.8L1766.1 821.2L1755.3 822.8L1747.5 829L1736.6 825.9L1727.3 816.6L1721.1 805.7L1722.7 796.4L1730.4 787.1L1738.2 779.3L1744.4 773.1L1747.5 770"/>
<path d="M1775.5 822.8L1783.2 810.4L1792.5 810.4L1800 816.6"/>
<path d="M1778.6 770L1784.8 777.8L1794.1 779.3L1800 776.2"/>
<path d="M1680.7 853.9L1685.4 863.2L1694.7 872.5L1700.9 879.3"/>
<path d="M1700.9 879.3L1722.7 880.2L1741.3 880.9L1759.9 878.7"/>
<path d="M1759.9 878.7L1767.7 870.9L1781.7 866.3L1791 869.4L1800 870.9"/>
<path d="M1759.9 878.7L1755.3 889.6L1766.1 892.7L1772.4 888L1780.1 892.7L1778.6 902L1783.2 906.6L1772.4 909.8L1766.1 919.1L1756.8 925.3L1747.5 933L1738.2 940.8L1727.3 943.9"/>
<path d="M1700.9 879.3L1693.2 894.2L1687 909.8L1690.1 922.2L1700.9 929.9L1713.4 934.6L1722.7 933L1727.3 943.9"/>
<path d="M1727.3 943.9L1730.4 956.3L1732 965.7L1730.4 975L1719.6 971.9L1707.1 968.8L1694.7 961L1685.4 964.1"/>
<path d="M1727.3 950.1L1741.3 959.4L1756.8 957.9L1766.1 953.2L1784.8 951.7L1789.4 939.3L1800 928.4"/>
<path d="M1572 844.5L1586 849.2L1596.9 852.3L1598.4 860.1"/>
<path d="M1598.4 860.1L1590.7 861.6L1582.9 869.4L1572 874L1573.6 883.4L1581.4 892.7L1587.6 903.5L1593.8 912.9L1589.1 922.2L1586 929.9L1578.3 937.7"/>
<path d="M1598.4 860.1L1601.6 869.4L1609.3 861.6L1620.2 860.1L1626.4 864.7L1629.5 874L1635.7 877.1L1631.1 886.5L1629.5 897.3L1640.4 898.9L1643.5 906.6L1638.8 914.4L1626.4 919.1L1620.2 926.8L1612.4 931.5"/>
<path d="M1635.7 877.1L1646.6 883.4L1652.8 894.2L1663.7 892.7L1676.1 891.1L1687 889.6L1693.2 894.2"/>
<path d="M1612.4 931.5L1626.4 931.5L1638.8 936.1L1645 942.4L1655.9 934.6L1663.7 939.3L1673 950.1L1680.7 959.4L1685.4 964.1"/>
<path d="M1612.4 931.5L1615.5 943.9L1609.3 956.3L1607.8 970.3L1596.9 975L1589.1 968.8L1581.4 965.7L1575.2 959.4L1567.4 954.8L1570.5 945.5L1578.3 937.7"/>
<path d="M1685.4 964.1L1671.4 971.9L1663.7 981.2L1660.6 996.7L1651.2 1006L1641.9 1012.2"/>
<path d="M1581.4 965.7L1582.9 975L1590.7 984.3L1598.4 987.4L1606.2 996.7L1620.2 1004.5L1632.6 1010.7L1641.9 1012.2"/>
<path d="M1641.9 1012.2L1643.5 1027.8L1643.5 1038.6L1648.1 1044.8"/>
<path d="M1648.1 1044.8L1657.5 1035.5L1669.9 1030.9L1683.9 1029.3L1688.5 1037.1L1687 1048L1674.5 1051.1L1663.7 1052.6L1648.1 1044.8"/>
<path d="M1687 1048L1693.2 1054.2L1700.9 1061.9L1704 1072.8L1719.6 1069.7L1732 1068.1L1737.6 1075.9L1736.6 1089.9L1738.2 1105.4L1741.3 1117.8L1744.4 1127.1"/>
<path d="M1744.4 1127.1L1756.8 1122.5L1772.4 1119.4L1787.9 1116.3L1800 1113.2"/>
<path d="M1744.4 1127.1L1749.1 1142.7L1753.7 1158.2L1759.9 1173.7L1766.1 1179.9"/>
<path d="M1766.1 1179.9L1773.9 1192.4L1780.1 1201.7L1791 1198.6L1800 1192.4"/>
<path d="M1766.1 1179.9L1753.7 1184.6L1750.6 1195.5L1738.2 1201.7L1736.6 1220"/>
<path d="M1780.1 1201.7L1787.9 1211L1791 1220"/>
<path d="M1744.4 1127.1L1732 1131.8L1722.7 1141.1L1718 1150.4L1719.6 1161.3L1714.9 1173.7L1708.7 1181.5L1694.7 1184.6L1682.3 1179.9L1673 1186.1L1663.7 1189.3L1655.9 1189.3L1649.7 1197"/>
<path d="M1649.7 1197L1638.8 1192.4L1631.1 1184.6L1623.3 1183L1614 1178.4"/>
<path d="M1614 1178.4L1598.4 1179.9L1582.9 1179.9L1567.4 1184.6L1551.9 1186.1"/>
<path d="M1614 1178.4L1607.8 1167.5L1601.6 1155.1L1598.4 1139.6L1598.4 1125.6"/>
<path d="M1598.4 1125.6L1587.6 1120.9L1586 1113.2L1589.1 1108.5L1579.8 1103.9L1567.4 1099.2L1562.7 1089.9L1561.2 1079L1557.5 1074.3"/>
<path d="M1598.4 1125.6L1606.2 1124L1612.4 1114.7L1614 1107L1617.1 1117.8L1623.3 1124L1631.1 1120.9L1634.2 1111.6L1631.1 1102.3L1637.3 1093L1638.8 1080.6L1632.6 1071.2L1626.4 1061.9L1623.3 1049.5L1626.4 1043.3L1632.6 1040.2L1638.8 1046.4L1648.1 1044.8"/>
<path d="M1638.8 1089.9L1651.2 1094.5L1660.6 1096.1L1662.1 1100.7L1666.8 1093L1676.1 1083.7L1685.4 1075.9L1691.6 1072.8L1685.4 1069.7L1687 1061.9L1693.2 1057.3"/>
<path d="M1557.5 1074.3L1573.6 1069.7L1586 1061.9L1596.9 1052.6L1598.4 1044.8L1592.2 1035.5L1581.4 1027.8L1573.6 1020L1572 1012.2L1578.3 1006L1586 999.8L1590.7 987.4"/>
<path d="M1557.5 1074.3L1548.8 1061.9L1541 1051.1L1534.8 1044.8L1539.4 1037.1L1542.5 1026.2L1533.2 1020L1523.9 1013.8L1513 1010.7"/>
<path d="M1513 1010.7L1509.9 998.3L1506.8 984.3L1511.5 978.1L1511.5 959.4L1517.7 948.6L1520.8 937.7L1528.6 931.5"/>
<path d="M1528.6 931.5L1539.4 922.2L1547.2 916L1555 917.5L1564.3 923.7L1570.5 929.9L1573.6 937.7L1578.3 937.7"/>
<path d="M1528.6 931.5L1517.7 926.8L1508.4 922.2L1502.2 906.6L1496 892.7L1486.6 892.7L1480.4 897.3L1478.9 909.8L1480.4 919.1L1486.6 923.7L1482 931.5L1480.4 942.4L1472.7 940.8L1463.4 939.3L1457.1 942.4L1454 931.5L1446.3 925.3L1435.4 922.2L1432.3 916L1424.5 909.8L1427.6 894.2L1426.1 880.2L1432.3 872.5L1446.3 866.3L1458.7 858.5L1471.1 852.3"/>
<path d="M1485.1 857L1488.2 872.5L1491.3 889.6L1496 892.7"/>
<path d="M1426.1 891.1L1405.9 888L1393.5 883.4L1385.7 877.1L1381.1 872.5L1371.7 884.9L1365.5 881.8L1357.8 878.7"/>
<path d="M1371.7 884.9L1381.1 897.3L1390.4 908.2L1398.1 916L1390.4 922.2L1379.5 929.9L1371.7 937.7L1376.4 948.6L1385.7 953.2"/>
<path d="M1480.4 942.4L1472.7 950.1L1458.7 956.3L1449.4 959.4L1441.6 967.2L1430.7 967.2L1423 959.4L1412.1 956.3L1396.6 954.8L1385.7 953.2"/>
<path d="M1385.7 953.2L1391.9 962.5L1391.9 978.1L1387.3 990.5L1382.6 1001.4L1373.3 1007.6"/>
<path d="M1379.5 929.9L1365.5 933L1356.2 939.3L1350 940.8"/>
<path d="M1373.3 1007.6L1360.9 1009.1L1354.7 1021.6L1357.8 1034L1350 1030.9"/>
<path d="M1373.3 1007.6L1381.1 1018.4L1390.4 1027.8L1399.7 1037.1L1407.5 1046.4L1410.6 1055.7L1407.5 1069.7"/>
<path d="M1407.5 1069.7L1393.5 1074.3L1385.7 1083.7L1378 1082.1L1371.7 1086.8L1376.4 1077.5L1364 1075.9L1350 1079"/>
<path d="M1407.5 1069.7L1415.2 1080.6L1426.1 1086.1L1433.9 1086.8"/>
<path d="M1513 1010.7L1502.2 1020L1486.6 1023.1L1474.2 1021.6L1463.4 1024.7L1458.7 1034L1459.3 1046.4L1456.2 1058.8L1457.1 1074.3L1450.9 1085.2L1433.9 1086.8"/>
<path d="M1433.9 1086.8L1437 1099.2L1441.6 1110.1"/>
<path d="M1385.7 1083.7L1387.3 1093L1382.6 1103.9L1388.8 1111.6L1396.6 1113.2L1401.2 1119.4L1410.6 1122.5L1416.8 1117.8L1424.5 1120.9L1429.2 1130.2L1443.2 1131.8L1450.9 1131.8L1446.3 1120.9L1441.6 1110.1"/>
<path d="M1441.6 1110.1L1454 1111.6L1460.2 1120.9L1468 1130.2L1471.1 1145.8L1474.2 1147.3"/>
<path d="M1474.2 1147.3L1486.6 1150.4L1492.9 1161.3L1496 1173.7"/>
<path d="M1496 1173.7L1508.4 1167.5L1516.1 1156.6L1522.4 1156.6L1534.8 1153.5"/>
<path d="M1534.8 1153.5L1536.3 1142.7L1531.7 1130.2L1527 1117.8L1528.6 1105.4L1523.9 1093L1520.8 1080.6L1536.3 1079L1548.8 1075.9L1557.5 1074.3"/>
<path d="M1534.8 1153.5L1542.5 1164.4L1548.8 1176.8L1551.9 1186.1"/>
<path d="M1551.9 1186.1L1553.4 1193.9L1561.2 1198.6L1562.7 1211L1561.2 1220"/>
<path d="M1623.3 1183L1628 1192.4L1631.1 1204.8L1629.5 1220"/>
<path d="M1638.8 1192.4L1641.9 1197L1655.9 1198.6L1663.7 1203.2L1668.3 1211L1666.8 1220"/>
<path d="M1496 1173.7L1483.5 1176.8L1474.2 1183L1468 1192.4L1452.5 1200.1L1449.4 1211L1433.9 1217.2L1426.1 1220"/>
<path d="M1474.2 1147.3L1464.9 1155.1L1455.6 1162.9L1446.3 1167.5L1444.7 1183L1430.7 1184.6L1418.3 1184.6L1416.8 1176.8L1410.6 1172.2L1396.6 1172.2L1390.4 1173.7"/>
<path d="M1416.8 1184.6L1409 1192.4L1407.5 1211L1401.2 1212.5L1393.5 1204.8L1388.8 1200.1L1390.4 1186.1L1390.4 1173.7L1387.3 1166L1395 1162.9L1396.6 1155.1"/>
<path d="M1396.6 1155.1L1391.9 1145.8L1381.1 1139.6L1365.5 1136.5L1354.7 1131.8L1350 1124"/>
<path d="M1396.6 1155.1L1402.8 1150.4L1401.2 1138L1402.8 1127.1L1410.6 1130.2L1416.8 1117.8"/>
<path d="M1350 1167.5L1357.8 1175.3L1365.5 1183L1376.4 1184.6L1388.8 1186.1"/>
<path d="M1388.8 1200.1L1381.1 1207.9L1374.8 1211L1367.1 1206.3L1362.4 1214.1L1356.2 1220"/>
<path d="M1800 818.1L1807.8 816.6L1810.9 798L1812.4 787.1L1804.7 777.8L1800 774.7"/>
<path d="M1812.4 787.1L1821.7 798L1832.6 811.9L1838.8 825.9L1843.5 836.8L1840.4 847.6L1838.8 860.1L1837.3 864.7"/>
<path d="M1832.6 811.9L1846.6 798L1859 790.2L1871.4 793.3L1882.3 794.8L1883.9 804.2L1896.3 801.1L1908.7 796.4L1919.6 788.6L1927.3 782.4L1930.4 770"/>
<path d="M1927.3 782.4L1939.8 779.3L1955.3 784L1969.3 780.9L1983.2 782.4L1989.4 776.2L1995.7 770"/>
<path d="M1983.2 782.4L1986.3 798L1989.4 810.4L1991 819.7"/>
<path d="M1840.4 852.3L1852.8 844.5L1871.4 841.4L1890.1 835.2L1905.6 833.7L1914.9 836.8"/>
<path d="M1914.9 836.8L1918 830.6L1930.4 830.6L1942.9 835.2L1952.2 841.4L1958.4 832.1L1973.9 825.9L1991 819.7L2001.9 816.6L2012.7 819.7L2014.3 829L2017.4 841.4L2022 853.9L2023.6 866.3L2022 878.7L2011.2 889.6L2003.4 900.4L1998.8 903.5"/>
<path d="M1914.9 836.8L1916.5 844.5L1908.7 852.3L1900.9 860.1"/>
<path d="M1808.7 858.5L1820.2 854.5L1824.2 862.5L1831.1 863.2L1833.5 853.2"/>
<path d="M1838.8 869.4L1851.2 866.3L1860.6 863.2L1869.9 870.9L1883.9 864.7L1900.9 860.1L1904 866.3L1899.4 874L1905.6 880.2L1899.4 883.4L1883.9 886.5L1865.2 888L1862.1 897.3L1866.8 902"/>
<path d="M1900.9 860.1L1916.5 863.2L1918 872.5L1936.6 874L1935.1 888L1946 892.7L1947.5 903.5L1958.4 911.3L1973.9 906.6L1989.4 903.5L1998.8 903.5"/>
<path d="M1998.8 903.5L2008.1 912.9L2018.9 906.6L2028.3 905.1L2039.1 909.8L2051.6 905.1"/>
<path d="M2036 911.3L2031.4 922.2L2017.4 926.8L2005 931.5L2006.5 940.8L1995.7 950.1L1986.3 953.2"/>
<path d="M2093.5 928.4L2096.6 940.8L2095 953.2L2098.1 965.7L2087.3 971.9L2085.7 982.7L2073.3 984.3L2064 988.9L2062.4 999.8L2067.1 1012.2L2071.7 1023.1L2071.7 1037.1"/>
<path d="M1800 912.9L1806.2 916L1809.3 906.6"/>
<path d="M1852.8 1055.7L1846.6 1063.5L1840.4 1072.8L1829.5 1077.5L1818.6 1080.6L1812.4 1089.9L1806.2 1102.3L1800 1113.2"/>
<path d="M1829.5 1077.5L1824.8 1088.3L1818.6 1089.9L1820.2 1099.2L1828 1110.1L1835.7 1117.8L1838.8 1127.1L1854.3 1130.2L1862.1 1136.5L1874.5 1138L1890.1 1141.1L1896.3 1138"/>
<path d="M1800 1189.3L1807.8 1178.4L1818.6 1172.2L1826.4 1173.7L1831.1 1179.9L1840.4 1186.1L1846.6 1198.6L1849.7 1211L1846.6 1220"/>
<path d="M1194.7 1269.7L1207.1 1266.6L1208.7 1257.3L1208.1 1244.8L1213.4 1232.4L1219.6 1220"/>
<path d="M1199.4 1289.9L1211.8 1285.2L1224.2 1279L1232 1269.7L1227.3 1263.5L1228.9 1255.7L1238.2 1251.1L1250.6 1249.5L1255.3 1246.4L1253.7 1232.4L1256.8 1220"/>
<path d="M1255.3 1246.4L1264.6 1254.2L1272.4 1257.3"/>
<path d="M1272.4 1257.3L1283.2 1252.6L1291 1246.4L1294.1 1240.2L1281.7 1234L1277 1224.7L1278.6 1220"/>
<path d="M1272.4 1257.3L1264.6 1266.6L1256.8 1274.3L1253.7 1283.7L1246 1291.4L1241.3 1296.1L1252.2 1302.3L1255.3 1314.7L1267.7 1319.4L1270.8 1324L1286.3 1320.9L1298.8 1320"/>
<path d="M1272.4 1257.3L1280.1 1265L1284.8 1272.8L1287.9 1279L1298.8 1274.3L1303.4 1282.1"/>
<path d="M1303.4 1282.1L1314.3 1275.9L1322 1271.2L1318.9 1261.9L1314.3 1254.2L1309.6 1248L1305 1243.3L1308.1 1237.1L1318.9 1233L1329.8 1235.5L1336 1241.7"/>
<path d="M1298.8 1220L1301.9 1232.4L1308.1 1237.1"/>
<path d="M1336 1241.7L1340.7 1234L1348.4 1226.2L1353.1 1220"/>
<path d="M1336 1241.7L1345.3 1252.6L1354.7 1263.5L1364 1271.2"/>
<path d="M1303.4 1282.1L1308.1 1291.4L1315.8 1297.6L1311.2 1310.1L1309.6 1319.4L1303.4 1314.7L1298.8 1320"/>
<path d="M1298.8 1320L1301.9 1331.8L1303.4 1342.7"/>
<path d="M1303.4 1342.7L1314.3 1338L1325.2 1336.5L1331.4 1330.2L1340.7 1327.1L1350 1328.7"/>
<path d="M1303.4 1342.7L1295.7 1348.9L1291 1356.6L1286.3 1370.6"/>
<path d="M1213.4 1353.5L1222.7 1352L1233.5 1355.1L1241.3 1362.9L1247.5 1367.5L1255.3 1364.4L1261.5 1366L1266.1 1362.9L1273.9 1369.1L1280.1 1370.6L1286.3 1370.6"/>
<path d="M1286.3 1370.6L1291 1378.4L1298.8 1373.7L1305 1369.1L1308.1 1378.4L1317.4 1373.7L1323.6 1369.1L1331.4 1379.9L1340.7 1378.4L1350.9 1377.8"/>
<path d="M1298.8 1373.7L1298.1 1387.7L1298.8 1397L1292.5 1404.8L1288.8 1406.3"/>
<path d="M1405.9 1220L1405.9 1230.9L1413.7 1234L1412.1 1244.8L1407.5 1251.1"/>
<path d="M1550 1232.4L1541 1234L1539.4 1241.7L1533.2 1249.5L1516.1 1251.1L1503.7 1254.2L1503.7 1261.9L1517.7 1266.6L1516.1 1272.8L1506.8 1275.9L1496 1280.6L1485.1 1282.1L1485.1 1286.8L1489.8 1293L1477.3 1289.9"/>
<path d="M1550 1310.1L1534.8 1313.2L1522.4 1319.4L1509.9 1324L1506.8 1330.2L1508.4 1338"/>
<path d="M1550 1241.7L1560.9 1241.7L1571.7 1243.3L1574.8 1260.4L1581.1 1265"/>
<path d="M1581.1 1265L1596.6 1263.5L1609 1260.4L1616.8 1255.7L1618.3 1248L1627.6 1244.8L1626.1 1235.5L1621.4 1226.2L1624.5 1220"/>
<path d="M1581.1 1265L1587.3 1277.5L1590.4 1288.3L1605.9 1282.1L1621.4 1277.5L1635.4 1272.8L1643.2 1265L1652.5 1261.9L1658.7 1260.4"/>
<path d="M1658.7 1260.4L1654 1248L1649.4 1237.1L1657.1 1227.8L1660.2 1220"/>
<path d="M1658.7 1260.4L1663.4 1269.7L1677.3 1274.3L1688.2 1277.5L1696 1283.7"/>
<path d="M1696 1283.7L1705.3 1285.2L1709.9 1283.7L1714.6 1293L1723.9 1296.1L1731.7 1297.6L1734.8 1286.8L1742.5 1279L1751.9 1272.8"/>
<path d="M1751.9 1272.8L1750.3 1263.5L1751.9 1254.2L1747.2 1244.8L1739.4 1237.1L1736.3 1226.2L1737.9 1220"/>
<path d="M1751.9 1272.8L1758.1 1282.1L1764.3 1286.8L1768.9 1297.6L1770.5 1310.1L1768.9 1325.6L1772 1341.1"/>
<path d="M1772 1341.1L1784.5 1341.1L1790.7 1334.9L1796.9 1325.6L1800 1317.8L1806.2 1325.6L1812.4 1333.4L1820.2 1338L1828 1342.7"/>
<path d="M1828 1342.7L1831.1 1331.8L1835.7 1319.4L1838.8 1303.9L1840.4 1288.3L1840.4 1266.6L1838.8 1257.3L1831.1 1249.5L1824.8 1243.3L1818.6 1237.1"/>
<path d="M1818.6 1237.1L1812.4 1235.5L1804.7 1241.7L1803.1 1248L1793.8 1252.6L1786 1244.8L1779.8 1235.5L1776.7 1227.8L1781.4 1220"/>
<path d="M1818.6 1237.1L1823.3 1227.8L1832.6 1221.6L1841.9 1220"/>
<path d="M1840.4 1266.6L1849.7 1268.1L1860.6 1271.2L1868.3 1272.8L1869.9 1279L1879.2 1277.5L1882.3 1266.6L1890.1 1260.4L1899.4 1257.3L1910.2 1265"/>
<path d="M1910.2 1265L1919.6 1261.9L1930.4 1257.3L1939.8 1249.5L1944.4 1243.3"/>
<path d="M1910.2 1265L1918 1275.9L1913.4 1282.1L1911.8 1294.5L1916.5 1303.9L1921.1 1311.6L1930.4 1327.1L1921.1 1333.4L1911.8 1345.8"/>
<path d="M1911.8 1345.8L1907.1 1339.6L1900.9 1333.4L1899.4 1344.2L1890.1 1353.5L1879.2 1362.9L1874.5 1375.3L1871.4 1383L1863.7 1375.3L1848.1 1372.2L1843.5 1376.8"/>
<path d="M1843.5 1376.8L1832.6 1378.4L1824.8 1381.5L1821.7 1370.6L1823.3 1356.6L1829.5 1348.9L1828 1342.7"/>
<path d="M1843.5 1376.8L1849.7 1389.3L1854.3 1400.1L1848.1 1407.9L1838.8 1417.2L1834.2 1421.9"/>
<path d="M1772 1341.1L1775.2 1356.6L1778.3 1372.2L1776.7 1387.7L1779.8 1400.1L1773.6 1407.9L1772 1412.5"/>
<path d="M1911.8 1345.8L1908.7 1355.1L1914.9 1362.9L1922.7 1372.2L1918 1387.7L1913.4 1400.1L1925.8 1404.8L1938.2 1407.9L1944.4 1411"/>
<path d="M1944.4 1411L1953.7 1418.8L1964.6 1421.9L1972.4 1434.3L1981.7 1445.2L1987.9 1451.4L1989.4 1460.7"/>
<path d="M1944.4 1411L1935.1 1421.9L1932 1437.4L1927.3 1452.9L1924.2 1466.9"/>
<path d="M1846.6 1454.5L1857.5 1452.9L1866.8 1449.8L1876.1 1442L1888.5 1446.7L1904 1451.4L1914.9 1459.1L1924.2 1466.9"/>
<path d="M1924.2 1466.9L1911.8 1470L1900.9 1474.7L1894.7 1484L1891.6 1494.8L1899.4 1505.7L1907.1 1515L1911.8 1522.8"/>
<path d="M1911.8 1522.8L1904 1525.9L1899.4 1522.8L1893.2 1533.7L1885.4 1544.5"/>
<path d="M1911.8 1522.8L1921.1 1530.6L1927.3 1532.1L1930.4 1543L1938.2 1550.7L1941.3 1558.5L1936.6 1566.3L1944.4 1569.4L1949.1 1572.5L1956.8 1567.8L1967.7 1564.7L1977 1569.4L1983.2 1570.9L1984.8 1578.7L1989.4 1569.4"/>
<path d="M1936.6 1614.4L1941.3 1608.2L1949.1 1605.1L1953.7 1606.6"/>
<path d="M1550 1307L1562.4 1303.9L1574.8 1302.3L1587.3 1303.2"/>
<path d="M1590.4 1288.3L1588.8 1297.6L1587.3 1303.2L1585.7 1313.2L1591.9 1325.6L1596.6 1338L1593.5 1350.4L1596.6 1358.2"/>
<path d="M1596.6 1358.2L1605.9 1362.9L1616.8 1367.5L1629.2 1373.7L1635.4 1367.5L1643.2 1361.3L1644.7 1355.1L1652.5 1356.6"/>
<path d="M1652.5 1356.6L1652.5 1347.3L1655.6 1338L1668 1333.4L1677.3 1331.8L1675.8 1319.4L1678.9 1311.6L1677.3 1302.3L1680.4 1294.5L1688.2 1286.8L1696 1283.7"/>
<path d="M1714.6 1293L1717.7 1303.9L1727 1313.2L1733.2 1322.5L1739.4 1328.7L1742.5 1339.6L1736.3 1342.7L1734.8 1348.9L1730.1 1356.6L1725.5 1362.9L1728.6 1370.6L1719.3 1375.3L1714.6 1378.4"/>
<path d="M1714.6 1378.4L1723.9 1387.7L1728.6 1397L1730.1 1406.3L1736.3 1414.1"/>
<path d="M1652.5 1356.6L1660.2 1364.4L1674.2 1369.1L1686.6 1373.7L1694.4 1381.5L1699.1 1392.4L1700.6 1403.2L1703.7 1411"/>
<path d="M1596.6 1358.2L1602.8 1369.1L1609 1381.5L1612.1 1392.4L1615.2 1401.7"/>
<path d="M1615.2 1401.7L1626.1 1407.9L1640.1 1411L1655.6 1411L1671.1 1409.4L1677.3 1406.3L1683.5 1404.8L1688.2 1407.9L1696 1409.4L1703.7 1411L1706.8 1417.2L1714.6 1420.3"/>
<path d="M1615.2 1401.7L1612.1 1412.5L1605.9 1421.9L1601.2 1434.3L1598.1 1449.8"/>
<path d="M1598.1 1449.8L1587.3 1451.4L1576.4 1454.5"/>
<path d="M1598.1 1449.8L1610.6 1449.8L1621.4 1451.4L1629.2 1456L1632.3 1465.3L1640.1 1471.6L1643.2 1477.8L1640.1 1484L1641.6 1493.3L1633.9 1502.6L1623 1508.8"/>
<path d="M1623 1508.8L1633.9 1505.7L1643.2 1510.4L1654 1516.6L1663.4 1519.7L1666.5 1522.8L1672.7 1521.2"/>
<path d="M1623 1508.8L1629.2 1518.1L1633.9 1530.6L1632.3 1543L1629.2 1552.3L1632.3 1564.7L1637 1577.1L1638.5 1586.5L1633.9 1592.7L1635.4 1608.2L1638.5 1620.6L1646.3 1633L1650.9 1645.5L1652.5 1657.9L1650.9 1667.2"/>
</g>
</svg>
</body></html>
